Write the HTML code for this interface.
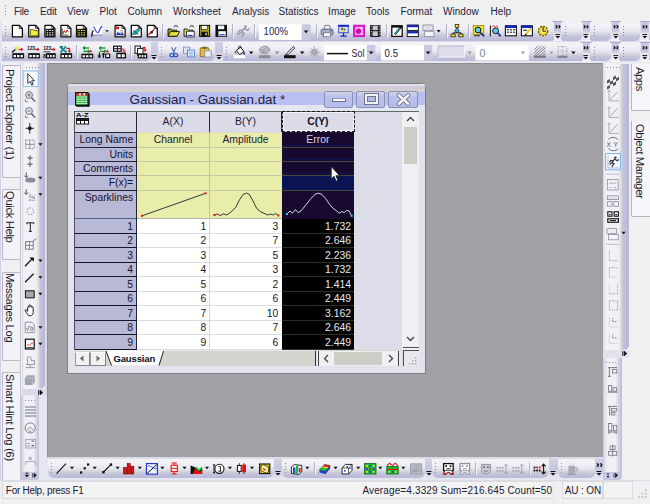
<!DOCTYPE html>
<html><head><meta charset="utf-8"><title>Origin</title>
<style>
html,body{margin:0;padding:0;}
body{width:650px;height:504px;overflow:hidden;position:relative;background:#e9e9f1;font-family:"Liberation Sans",sans-serif;font-size:10.4px;color:#1a1a30;}
.a{position:absolute;}
svg{position:absolute;overflow:visible;}
#menubar{left:0;top:0;width:650px;height:21px;background:#f0f0f1;}
#menubar span{position:absolute;top:6px;font-size:10px;color:#24243e;margin-left:-0.4px;white-space:nowrap;}
.tb{background:linear-gradient(#f7f7fb 0%,#ececf4 40%,#c6c6de 100%);border-radius:0 0 5px 0;}
.tbv{background:linear-gradient(90deg,#f7f7fb 0%,#ececf4 40%,#c6c6de 100%);border-radius:0 0 5px 0;}
.grip{position:absolute;width:1px;background:repeating-linear-gradient(#8a8aa0 0 1px,transparent 1px 3px);}
.griph{position:absolute;height:1px;background:repeating-linear-gradient(90deg,#8a8aa0 0 1px,transparent 1px 3px);}
#mdi{left:47.4px;top:63.4px;width:555.6px;height:393.4px;background:#a1a1a5;box-shadow:inset 0 1px 0 #8d8d92,inset 1px 0 0 #909096;}
#status{left:0;top:480px;width:650px;height:24px;background:#f0f0f2;}
#status span{position:absolute;top:5.4px;font-size:10px;color:#202030;white-space:nowrap;}
#win{left:67px;top:83px;width:359px;height:291px;}
.cell{position:absolute;white-space:nowrap;overflow:hidden;}
.rh{background:#b8b8d7;color:#1a1a38;text-align:right;}
.vt{position:absolute;writing-mode:vertical-rl;font-size:11px;color:#16162e;white-space:nowrap;}
</style></head><body>
<div id="menubar" class="a">
<div class="grip" style="left:5.2px;top:5px;height:12px"></div>
<span style="left:14.5px;letter-spacing:-0.4px">File</span><span style="left:40.5px;letter-spacing:-0.2px">Edit</span><span style="left:67.5px">View</span><span style="left:100px">Plot</span><span style="left:128px">Column</span><span style="left:173.5px">Worksheet</span><span style="left:232.5px">Analysis</span><span style="left:279px">Statistics</span><span style="left:328.5px">Image</span><span style="left:366.5px">Tools</span><span style="left:401px">Format</span><span style="left:443.5px">Window</span><span style="left:491px">Help</span>
</div>
<div id="toolbars">
<div class="a" style="left:0.0px;top:21.0px;width:650.0px;height:42.0px;background:#e4e4f0;"></div>
<div class="a" style="left:0.0px;top:61.3px;width:650.0px;height:2.3px;background:#e6e6f0;"></div>
<div class="a" style="left:0.0px;top:40.5px;width:650.0px;height:1.5px;background:#dcdcea;"></div>
<div class="a" style="left:1.5px;top:21.0px;width:552.5px;height:19.5px;background:linear-gradient(#f3f3f6 0%,#efeff5 30%,#e4e4f0 52%,#d4d4da 66%,#c4c4dc 77%,#b9b9d8 100%);border-radius:0 0 0px 0;"></div>
<div class="grip" style="left:4.7px;top:25.5px;height:11px"></div>
<div class="a" style="left:561.2px;top:21.0px;width:20.6px;height:19.5px;background:linear-gradient(#f3f3f6 0%,#efeff5 30%,#e4e4f0 52%,#d4d4da 66%,#c4c4dc 77%,#b9b9d8 100%);border-radius:0 0 5px 0;"></div>
<div class="grip" style="left:565.4px;top:25.5px;height:11px"></div>
<div class="a" style="left:554.0px;top:21.0px;width:7.4px;height:19.5px;background:linear-gradient(#c8c8e3 0,#c4c4e0 48%,#d4d4d2 55%,#e6e6f0 63%,#efeff5 100%);"></div>
<div class="a" style="left:552.4px;top:20.8px;width:10.5px;height:1.5px;background:#a9a9d0;border-radius:1px;"></div>
<div class="a" style="left:553.0px;top:39.5px;width:9.4px;height:1.4px;background:#f4f4f8;"></div>
<svg style="left:554.6px;top:25.0px" width="6" height="3.4" viewBox="0 0 6 3.4"><path d="M0.3 0.2H1.9L2.7 1.7L1.9 3.2H0.3L1.1 1.7Z M3.2 0.2H4.8L5.6 1.7L4.8 3.2H3.2L4 1.7Z" fill="#14141f"/></svg>
<svg style="left:554.6px;top:33.9px" width="5.6" height="5" viewBox="0 0 5.6 5"><path d="M0.4 0.6H5.2" stroke="#101018" stroke-width="1"/><path d="M0.4 2H5.2L2.8 4.6Z" fill="#101018"/></svg>
<div class="a" style="left:590.0px;top:21.0px;width:21.0px;height:19.5px;background:linear-gradient(#f3f3f6 0%,#efeff5 30%,#e4e4f0 52%,#d4d4da 66%,#c4c4dc 77%,#b9b9d8 100%);border-radius:0 0 5px 0;"></div>
<div class="grip" style="left:594.2px;top:25.5px;height:11px"></div>
<div class="a" style="left:582.8px;top:21.0px;width:7.4px;height:19.5px;background:linear-gradient(#c8c8e3 0,#c4c4e0 48%,#d4d4d2 55%,#e6e6f0 63%,#efeff5 100%);"></div>
<div class="a" style="left:581.2px;top:20.8px;width:10.5px;height:1.5px;background:#a9a9d0;border-radius:1px;"></div>
<div class="a" style="left:581.8px;top:39.5px;width:9.4px;height:1.4px;background:#f4f4f8;"></div>
<svg style="left:583.4px;top:25.0px" width="6" height="3.4" viewBox="0 0 6 3.4"><path d="M0.3 0.2H1.9L2.7 1.7L1.9 3.2H0.3L1.1 1.7Z M3.2 0.2H4.8L5.6 1.7L4.8 3.2H3.2L4 1.7Z" fill="#14141f"/></svg>
<svg style="left:583.4px;top:33.9px" width="5.6" height="5" viewBox="0 0 5.6 5"><path d="M0.4 0.6H5.2" stroke="#101018" stroke-width="1"/><path d="M0.4 2H5.2L2.8 4.6Z" fill="#101018"/></svg>
<div class="a" style="left:619.2px;top:21.0px;width:21.1px;height:19.5px;background:linear-gradient(#f3f3f6 0%,#efeff5 30%,#e4e4f0 52%,#d4d4da 66%,#c4c4dc 77%,#b9b9d8 100%);border-radius:0 0 5px 0;"></div>
<div class="grip" style="left:623.4px;top:25.5px;height:11px"></div>
<div class="a" style="left:612.0px;top:21.0px;width:7.4px;height:19.5px;background:linear-gradient(#c8c8e3 0,#c4c4e0 48%,#d4d4d2 55%,#e6e6f0 63%,#efeff5 100%);"></div>
<div class="a" style="left:610.4px;top:20.8px;width:10.5px;height:1.5px;background:#a9a9d0;border-radius:1px;"></div>
<div class="a" style="left:611.0px;top:39.5px;width:9.4px;height:1.4px;background:#f4f4f8;"></div>
<svg style="left:612.6px;top:25.0px" width="6" height="3.4" viewBox="0 0 6 3.4"><path d="M0.3 0.2H1.9L2.7 1.7L1.9 3.2H0.3L1.1 1.7Z M3.2 0.2H4.8L5.6 1.7L4.8 3.2H3.2L4 1.7Z" fill="#14141f"/></svg>
<svg style="left:612.6px;top:33.9px" width="5.6" height="5" viewBox="0 0 5.6 5"><path d="M0.4 0.6H5.2" stroke="#101018" stroke-width="1"/><path d="M0.4 2H5.2L2.8 4.6Z" fill="#101018"/></svg>
<div class="a" style="left:648.5px;top:21.0px;width:1.5px;height:19.5px;background:linear-gradient(#f3f3f6 0%,#efeff5 30%,#e4e4f0 52%,#d4d4da 66%,#c4c4dc 77%,#b9b9d8 100%);border-radius:0 0 5px 0;"></div>
<div class="grip" style="left:652.7px;top:25.5px;height:11px"></div>
<div class="a" style="left:641.3px;top:21.0px;width:7.4px;height:19.5px;background:linear-gradient(#c8c8e3 0,#c4c4e0 48%,#d4d4d2 55%,#e6e6f0 63%,#efeff5 100%);"></div>
<div class="a" style="left:639.7px;top:20.8px;width:10.5px;height:1.5px;background:#a9a9d0;border-radius:1px;"></div>
<div class="a" style="left:640.3px;top:39.5px;width:9.4px;height:1.4px;background:#f4f4f8;"></div>
<svg style="left:641.9px;top:25.0px" width="6" height="3.4" viewBox="0 0 6 3.4"><path d="M0.3 0.2H1.9L2.7 1.7L1.9 3.2H0.3L1.1 1.7Z M3.2 0.2H4.8L5.6 1.7L4.8 3.2H3.2L4 1.7Z" fill="#14141f"/></svg>
<svg style="left:641.9px;top:33.9px" width="5.6" height="5" viewBox="0 0 5.6 5"><path d="M0.4 0.6H5.2" stroke="#101018" stroke-width="1"/><path d="M0.4 2H5.2L2.8 4.6Z" fill="#101018"/></svg>
<div class="a" style="left:1.5px;top:42.0px;width:149.0px;height:19.3px;background:linear-gradient(#f3f3f6 0%,#efeff5 30%,#e4e4f0 52%,#d4d4da 66%,#c4c4dc 77%,#b9b9d8 100%);border-radius:0 0 5px 0;"></div>
<div class="grip" style="left:4.7px;top:46.5px;height:11px"></div>
<div class="a" style="left:150.5px;top:42.0px;width:7.2px;height:19.3px;background:linear-gradient(#d2d2e6 0%,#c6c6e0 50%,#e4e4f0 100%);"></div>
<svg style="left:151.1px;top:55.1px" width="6" height="5" viewBox="0 0 6 5"><path d="M0.5 0.5H5.5" stroke="#101018" stroke-width="1"/><path d="M0.5 2H5.5L3 4.6Z" fill="#101018"/></svg>
<div class="a" style="left:157.7px;top:42.0px;width:57.7px;height:19.3px;background:linear-gradient(#f3f3f6 0%,#efeff5 30%,#e4e4f0 52%,#d4d4da 66%,#c4c4dc 77%,#b9b9d8 100%);border-radius:0 0 5px 0;"></div>
<div class="grip" style="left:160.9px;top:46.5px;height:11px"></div>
<div class="a" style="left:215.4px;top:42.0px;width:7.6px;height:19.3px;background:linear-gradient(#d2d2e6 0%,#c6c6e0 50%,#e4e4f0 100%);"></div>
<svg style="left:216.2px;top:55.1px" width="6" height="5" viewBox="0 0 6 5"><path d="M0.5 0.5H5.5" stroke="#101018" stroke-width="1"/><path d="M0.5 2H5.5L3 4.6Z" fill="#101018"/></svg>
<div class="a" style="left:223.0px;top:42.0px;width:360.0px;height:19.3px;background:linear-gradient(#f3f3f6 0%,#efeff5 30%,#e4e4f0 52%,#d4d4da 66%,#c4c4dc 77%,#b9b9d8 100%);border-radius:0 0 0px 0;"></div>
<div class="grip" style="left:226.2px;top:46.5px;height:11px"></div>
<div class="a" style="left:590.0px;top:42.0px;width:21.0px;height:19.3px;background:linear-gradient(#f3f3f6 0%,#efeff5 30%,#e4e4f0 52%,#d4d4da 66%,#c4c4dc 77%,#b9b9d8 100%);border-radius:0 0 5px 0;"></div>
<div class="grip" style="left:594.2px;top:46.5px;height:11px"></div>
<div class="a" style="left:582.8px;top:42.0px;width:7.4px;height:19.3px;background:linear-gradient(#c8c8e3 0,#c4c4e0 48%,#d4d4d2 55%,#e6e6f0 63%,#efeff5 100%);"></div>
<div class="a" style="left:581.2px;top:41.8px;width:10.5px;height:1.5px;background:#a9a9d0;border-radius:1px;"></div>
<div class="a" style="left:581.8px;top:60.3px;width:9.4px;height:1.4px;background:#f4f4f8;"></div>
<svg style="left:583.4px;top:46.0px" width="6" height="3.4" viewBox="0 0 6 3.4"><path d="M0.3 0.2H1.9L2.7 1.7L1.9 3.2H0.3L1.1 1.7Z M3.2 0.2H4.8L5.6 1.7L4.8 3.2H3.2L4 1.7Z" fill="#14141f"/></svg>
<svg style="left:583.4px;top:54.7px" width="5.6" height="5" viewBox="0 0 5.6 5"><path d="M0.4 0.6H5.2" stroke="#101018" stroke-width="1"/><path d="M0.4 2H5.2L2.8 4.6Z" fill="#101018"/></svg>
<div class="a" style="left:619.2px;top:42.0px;width:21.1px;height:19.3px;background:linear-gradient(#f3f3f6 0%,#efeff5 30%,#e4e4f0 52%,#d4d4da 66%,#c4c4dc 77%,#b9b9d8 100%);border-radius:0 0 5px 0;"></div>
<div class="grip" style="left:623.4px;top:46.5px;height:11px"></div>
<div class="a" style="left:612.0px;top:42.0px;width:7.4px;height:19.3px;background:linear-gradient(#c8c8e3 0,#c4c4e0 48%,#d4d4d2 55%,#e6e6f0 63%,#efeff5 100%);"></div>
<div class="a" style="left:610.4px;top:41.8px;width:10.5px;height:1.5px;background:#a9a9d0;border-radius:1px;"></div>
<div class="a" style="left:611.0px;top:60.3px;width:9.4px;height:1.4px;background:#f4f4f8;"></div>
<svg style="left:612.6px;top:46.0px" width="6" height="3.4" viewBox="0 0 6 3.4"><path d="M0.3 0.2H1.9L2.7 1.7L1.9 3.2H0.3L1.1 1.7Z M3.2 0.2H4.8L5.6 1.7L4.8 3.2H3.2L4 1.7Z" fill="#14141f"/></svg>
<svg style="left:612.6px;top:54.7px" width="5.6" height="5" viewBox="0 0 5.6 5"><path d="M0.4 0.6H5.2" stroke="#101018" stroke-width="1"/><path d="M0.4 2H5.2L2.8 4.6Z" fill="#101018"/></svg>
<div class="a" style="left:648.5px;top:42.0px;width:1.5px;height:19.3px;background:linear-gradient(#f3f3f6 0%,#efeff5 30%,#e4e4f0 52%,#d4d4da 66%,#c4c4dc 77%,#b9b9d8 100%);border-radius:0 0 5px 0;"></div>
<div class="grip" style="left:652.7px;top:46.5px;height:11px"></div>
<div class="a" style="left:641.3px;top:42.0px;width:7.4px;height:19.3px;background:linear-gradient(#c8c8e3 0,#c4c4e0 48%,#d4d4d2 55%,#e6e6f0 63%,#efeff5 100%);"></div>
<div class="a" style="left:639.7px;top:41.8px;width:10.5px;height:1.5px;background:#a9a9d0;border-radius:1px;"></div>
<div class="a" style="left:640.3px;top:60.3px;width:9.4px;height:1.4px;background:#f4f4f8;"></div>
<svg style="left:641.9px;top:46.0px" width="6" height="3.4" viewBox="0 0 6 3.4"><path d="M0.3 0.2H1.9L2.7 1.7L1.9 3.2H0.3L1.1 1.7Z M3.2 0.2H4.8L5.6 1.7L4.8 3.2H3.2L4 1.7Z" fill="#14141f"/></svg>
<svg style="left:641.9px;top:54.7px" width="5.6" height="5" viewBox="0 0 5.6 5"><path d="M0.4 0.6H5.2" stroke="#101018" stroke-width="1"/><path d="M0.4 2H5.2L2.8 4.6Z" fill="#101018"/></svg>
<div class="a" style="left:161.5px;top:23.5px;width:1.0px;height:14.5px;background:#b4b4c8;box-shadow:1px 0 0 #f4f4fa;"></div>
<div class="a" style="left:231.5px;top:23.5px;width:1.0px;height:14.5px;background:#b4b4c8;box-shadow:1px 0 0 #f4f4fa;"></div>
<div class="a" style="left:254.0px;top:23.5px;width:1.0px;height:14.5px;background:#b4b4c8;box-shadow:1px 0 0 #f4f4fa;"></div>
<div class="a" style="left:315.5px;top:23.5px;width:1.0px;height:14.5px;background:#b4b4c8;box-shadow:1px 0 0 #f4f4fa;"></div>
<div class="a" style="left:385.8px;top:23.5px;width:1.0px;height:14.5px;background:#b4b4c8;box-shadow:1px 0 0 #f4f4fa;"></div>
<div class="a" style="left:446.0px;top:23.5px;width:1.0px;height:14.5px;background:#b4b4c8;box-shadow:1px 0 0 #f4f4fa;"></div>
<div class="a" style="left:468.0px;top:23.5px;width:1.0px;height:14.5px;background:#b4b4c8;box-shadow:1px 0 0 #f4f4fa;"></div>
<div class="a" style="left:76.0px;top:44.5px;width:1.0px;height:14.5px;background:#b4b4c8;box-shadow:1px 0 0 #f4f4fa;"></div>
<div class="a" style="left:130.0px;top:44.5px;width:1.0px;height:14.5px;background:#b4b4c8;box-shadow:1px 0 0 #f4f4fa;"></div>
<svg style="left:0;top:0" width="650" height="64" viewBox="0 0 650 64"><path d="M12.4 25.3H19.2L22.4 28.5V36.8H12.4Z" fill="#fff" stroke="#0c0c0c" stroke-width="1.25" stroke-linejoin="round"/><path d="M19.2 25.6V28.5H22.1" fill="none" stroke="#0c0c0c" stroke-width="0.7"/><path d="M28.7 25.3H35.5L38.7 28.5V36.8H28.7Z" fill="#fff" stroke="#0c0c0c" stroke-width="1.25" stroke-linejoin="round"/><path d="M35.5 25.6V28.5H38.4" fill="none" stroke="#0c0c0c" stroke-width="0.7"/><path d="M30.4 29.6H33.4L34.2 30.6H38.2V35.8H30.4Z" fill="#f2f040" stroke="#4c4600" stroke-width="0.8"/><path d="M44.9 25.3H51.7L54.9 28.5V36.8H44.9Z" fill="#fff" stroke="#0c0c0c" stroke-width="1.25" stroke-linejoin="round"/><path d="M51.7 25.6V28.5H54.6" fill="none" stroke="#0c0c0c" stroke-width="0.7"/><rect x="46.2" y="29.4" width="7.6" height="6.6" fill="#fff" stroke="#0c0c0c" stroke-width="1.1"/><path d="M46.2 31.6H53.8M46.2 33.8H53.8M48.7 29.4V36.0M51.3 29.4V36.0" stroke="#0c0c0c" stroke-width="1.05"/><path d="M60.9 25.3H67.7L70.9 28.5V36.8H60.9Z" fill="#fff" stroke="#0c0c0c" stroke-width="1.25" stroke-linejoin="round"/><path d="M67.7 25.6V28.5H70.6" fill="none" stroke="#0c0c0c" stroke-width="0.7"/><path d="M62.2 28.3V35.1H68.5" stroke="#101010" stroke-width="0.8" fill="none"/><path d="M62.8 33.8L64.3 30.6L65.6 33.0L67 30.0L68.3 32.2" stroke="#e01010" stroke-width="1" fill="none"/><path d="M76.5 25.3H83.3L86.5 28.5V36.8H76.5Z" fill="#fff" stroke="#0c0c0c" stroke-width="1.25" stroke-linejoin="round"/><path d="M83.3 25.6V28.5H86.2" fill="none" stroke="#0c0c0c" stroke-width="0.7"/><rect x="77.8" y="29.4" width="7.6" height="6.6" fill="#f6f030" stroke="#0c0c0c" stroke-width="1.1"/><path d="M77.8 31.6H85.4M77.8 33.8H85.4M80.3 29.4V36.0M82.9 29.4V36.0" stroke="#0c0c0c" stroke-width="1.05"/><rect x="93" y="24.8" width="9.5" height="9.5" fill="#fff"/><path d="M93.3 26.8C95 26.8 95.6 32.8 97.6 32.8S100 26.400000000000002 102.3 26.400000000000002" stroke="#2838e0" stroke-width="1.1" fill="none"/><path d="M93 35.3H102.6" stroke="#8088c0" stroke-width="0.8"/><path d="M91.6 36.8C92.2 33.8 92.2 31.8 93.4 30.4" stroke="#101010" stroke-width="1.2" fill="none"/><path d="M105.2 30.1H109L107.1 32.4Z" fill="#404050"/><path d="M115.1 25.3H121.9L125.1 28.5V36.8H115.1Z" fill="#fff" stroke="#0c0c0c" stroke-width="1.25" stroke-linejoin="round"/><path d="M121.9 25.6V28.5H124.8" fill="none" stroke="#0c0c0c" stroke-width="0.7"/><rect x="116" y="26.6" width="3" height="2.6" fill="#e01818"/><path d="M116 35.2L117.6 31.4L119 33.4L120 32.2L121.2 35.2Z" fill="#1830d8"/><path d="M120.2 30.8H123M120.8 32.4H123" stroke="#606060" stroke-width="0.7"/><path d="M121 33.4H123.6V35.4H121Z" fill="#303030"/><path d="M131.3 25.3H138.1L141.3 28.5V36.8H131.3Z" fill="#fff" stroke="#0c0c0c" stroke-width="1.25" stroke-linejoin="round"/><path d="M138.1 25.6V28.5H141.0" fill="none" stroke="#0c0c0c" stroke-width="0.7"/><path d="M132.4 34.4C133 30.8 137.6 29.0 139.4 29.4C139.6 32.4 135.6 35.4 132.4 34.4Z" fill="#28b0b8" stroke="#105860" stroke-width="0.7"/><path d="M133 30.4L138.6 34.8" stroke="#105860" stroke-width="0.9"/><path d="M147.3 25.3H154.1L157.3 28.5V36.8H147.3Z" fill="#fff" stroke="#0c0c0c" stroke-width="1.25" stroke-linejoin="round"/><path d="M154.1 25.6V28.5H157.0" fill="none" stroke="#0c0c0c" stroke-width="0.7"/><path d="M148.4 35.0L154.4 29.200000000000003" stroke="#e01818" stroke-width="1.2"/><rect x="150.6" y="31.200000000000003" width="2.2" height="2.2" fill="#101010"/><path d="M168 29.0H171.4L172.4 30.200000000000003H177V36.2H168Z" fill="#a8a020" stroke="#101010" stroke-width="0.9"/><path d="M168.2 36.2L170.4 31.6H179.6L177.2 36.2Z" fill="#e8e048" stroke="#101010" stroke-width="0.9"/><path d="M173.6 27.0C175 25.2 177.4 25.400000000000002 178 27.2" stroke="#101010" stroke-width="0.9" fill="none"/><path d="M184 29.0H187.4L188.4 30.200000000000003H193V36.2H184Z" fill="#e8e048" stroke="#101010" stroke-width="0.9"/><rect x="186.6" y="31.200000000000003" width="7.6" height="5.8" fill="#fff" stroke="#101010" stroke-width="0.8"/><path d="M187.6 35.4H192.6" stroke="#1830d8" stroke-width="1.1"/><path d="M189.6 27.0C191 25.2 193.4 25.400000000000002 194 27.2" stroke="#101010" stroke-width="0.9" fill="none"/><rect x="199.6" y="25.400000000000002" width="10" height="11" fill="#a8a020" stroke="#101010" stroke-width="1.1"/><rect x="201.6" y="25.6" width="6" height="4" fill="#f4f4e0" stroke="#101010" stroke-width="0.6"/><rect x="201.4" y="31.8" width="6.4" height="4.6" fill="#101010"/><rect x="205.4" y="32.8" width="1.4" height="2.6" fill="#c8c8c8"/><rect x="216" y="25.400000000000002" width="10.4" height="11" fill="#101010" stroke="#101010" stroke-width="1.1"/><rect x="218" y="25.6" width="6.2" height="3.6" fill="#f4f4f4"/><rect x="218.4" y="31.200000000000003" width="7.4" height="5" fill="#fff"/><path d="M219.2 34.8H224.8" stroke="#1830d8" stroke-width="1.2"/><circle cx="245.4" cy="26.6" r="1.4" fill="#9c9cae"/><path d="M244.4 28.2L241.6 32.2L244 33.4L241.8 36.6M244.4 28.400000000000002L247.6 30.200000000000003L249 28.8M243 30.6L240 30.200000000000003L238.4 32.2M241.8 32.4L238.8 34.2L237.4 33.8" stroke="#9c9cae" stroke-width="1.5" fill="none" stroke-linecap="round"/><rect x="259" y="24.4" width="42.8" height="15.6" fill="#fff"/><rect x="301.8" y="24.4" width="9" height="15.6" fill="#c9c9e2"/><path d="M303.8 30.6H308.4L306.1 33.2Z" fill="#101018"/><text x="263.6" y="35.2" font-family="Liberation Sans, sans-serif" font-size="10.8" fill="#22224a" textLength="24.5" lengthAdjust="spacingAndGlyphs">100%</text><path d="M324 29.4L325 25.400000000000002H329.6L330.6 29.4Z" fill="#f0f0f4" stroke="#606878" stroke-width="0.8"/><rect x="321.2" y="29.200000000000003" width="11.8" height="5.6" rx="1" fill="#a8b0c4" stroke="#505868" stroke-width="0.8"/><rect x="323.6" y="32.8" width="7" height="4" fill="#f4f4f8" stroke="#606878" stroke-width="0.7"/><rect x="330" y="30.4" width="1.6" height="1.2" fill="#4060d0"/><rect x="338" y="24.8" width="11" height="1.8" fill="#1828c8"/><rect x="338.8" y="26.6" width="9.4" height="6.2" fill="#d8e8f8" stroke="#1828c8" stroke-width="0.8"/><rect x="341" y="27.8" width="2" height="2" fill="#e02020"/><rect x="343.4" y="28.400000000000002" width="2" height="2.4" fill="#20b040"/><rect x="342" y="30.0" width="2" height="1.8" fill="#e8d820"/><path d="M343.5 32.8V35.6M340.4 36.2H346.8" stroke="#1828c8" stroke-width="1.3"/><rect x="353.6" y="25.2" width="11" height="11.4" fill="#f020d8" stroke="#c010b0" stroke-width="0.9"/><rect x="355.4" y="27.0" width="7.4" height="7.8" fill="#f8b8f0"/><circle cx="358.6" cy="31.200000000000003" r="2.6" fill="#c010b0"/><path d="M360.6 28.0H362.6M360.6 34.0H362.6" stroke="#fff" stroke-width="0.9"/><rect x="370" y="25.0" width="10.4" height="12" fill="#101010"/><rect x="372.6" y="25.6" width="5.2" height="4.6" fill="#c8c8d4"/><rect x="372.6" y="31.200000000000003" width="5.2" height="4.8" fill="#c8c8d4"/><path d="M371.2 25.8V36.8M379.2 25.8V36.8" stroke="#e8e8e8" stroke-width="0.9" stroke-dasharray="1.2 1.4"/><rect x="391.8" y="25.8" width="10.4" height="10.6" fill="#fff" stroke="#101010" stroke-width="1.3"/><rect x="391.8" y="25.400000000000002" width="10.4" height="2.2" fill="#101010"/><path d="M395 34.4L401.4 26.400000000000002" stroke="#101010" stroke-width="2.2"/><path d="M395.2 34.2L400 28.2" stroke="#28b8c8" stroke-width="1.1"/><rect x="407.2" y="25.0" width="11.2" height="5.4" fill="#fff" stroke="#101010" stroke-width="0.9"/><rect x="407.2" y="25.0" width="11.2" height="2.2" fill="#1828b8"/><rect x="407.2" y="31.2" width="11.2" height="5.4" fill="#fff" stroke="#101010" stroke-width="0.9"/><rect x="407.2" y="31.2" width="11.2" height="2.2" fill="#1828b8"/><rect x="423" y="25.0" width="10" height="5.6" fill="#ececf4" stroke="#9090a4" stroke-width="0.9"/><path d="M423.4 25.400000000000002L432.6 30.200000000000003M432.6 25.400000000000002L423.4 30.200000000000003" stroke="#c0c0d0" stroke-width="0.6"/><rect x="424.4" y="31.200000000000003" width="9.6" height="5.4" fill="#f4f4f8" stroke="#9090a4" stroke-width="0.9"/><path d="M436.6 30.1H440.6L438.6 32.4Z" fill="#101018"/><path d="M457 27.400000000000002V32.8M453 34.8V32.8H461V34.8" stroke="#101010" stroke-width="0.9" fill="none"/><rect x="455.2" y="24.6" width="3.6" height="2.8" fill="#f0e020" stroke="#101010" stroke-width="0.7"/><path d="M457 28.400000000000002L459.4 30.6L457 32.8L454.6 30.6Z" fill="#30c8e0" stroke="#101010" stroke-width="0.7"/><rect x="451" y="34.0" width="4.2" height="2.8" fill="#f0e020" stroke="#101010" stroke-width="0.7"/><rect x="458.8" y="34.0" width="4.2" height="2.8" fill="#f0e020" stroke="#101010" stroke-width="0.7"/><rect x="473.2" y="25.400000000000002" width="10.6" height="9" fill="#f4e828" stroke="#807800" stroke-width="0.7"/><circle cx="478" cy="30.0" r="2.9" fill="#58d0e8" stroke="#101010" stroke-width="1"/><path d="M480.2 32.4L484.2 36.4" stroke="#1828b8" stroke-width="1.8"/><path d="M474 35.8H480" stroke="#101010" stroke-width="0.9"/><path d="M490.4 25.400000000000002V36.4" stroke="#101010" stroke-width="1"/><path d="M492 27.2L493.6 25.6L495.2 27.400000000000002L496.8 25.8L498.4 27.400000000000002" stroke="#e02020" stroke-width="0.9" fill="none"/><circle cx="495.6" cy="30.8" r="2.9" fill="#58d0e8" stroke="#101010" stroke-width="1"/><path d="M497.8 33.0L500.6 36.4" stroke="#1828b8" stroke-width="1.7"/><rect x="505.4" y="25.8" width="11" height="10" fill="#fff" stroke="#101010" stroke-width="1.1"/><rect x="505.4" y="25.400000000000002" width="11" height="2.6" fill="#1828b8"/><path d="M507 29.8H515M507 32.2H515" stroke="#101010" stroke-width="1" stroke-dasharray="2 1"/><rect x="521.4" y="25.8" width="11" height="10" fill="#fff" stroke="#101010" stroke-width="1.1"/><rect x="521.4" y="25.400000000000002" width="11" height="2.6" fill="#1828b8"/><path d="M523 30.200000000000003H527" stroke="#101010" stroke-width="1"/><path d="M525.6 34.8L530.8 28.400000000000002" stroke="#e8c820" stroke-width="1.8"/><path d="M525 35.4L526.2 34.0" stroke="#101010" stroke-width="1.2"/><circle cx="543" cy="31.0" r="4.7" fill="#e8d828" stroke="#605800" stroke-width="1.3" stroke-dasharray="2 1.1"/><circle cx="543" cy="31.0" r="2.3" fill="#f8f0a0"/><path d="M543 27.2V31.200000000000003H545.6" stroke="#101010" stroke-width="1" fill="none"/><rect x="13.0" y="54.0" width="10.5" height="3.8" fill="#fff" stroke="#101010" stroke-width="1.2"/><path d="M16.5 54.0V57.8M20.0 54.0V57.8" stroke="#101010" stroke-width="1.1"/><rect x="13.0" y="53.4" width="10.5" height="1.4" fill="#101010"/><path d="M12 52.4L16.4 48.6" stroke="#101010" stroke-width="1.3"/><path d="M16.6 45.6L17.4 47.4L19.2 47.8L17.6 48.8L17.8 50.6L16.4 49.4L14.6 50L15.4 48.4L14.4 46.8L16.2 47.2Z" fill="#f4e820"/><path d="M18.6 49.4H21.6" stroke="#e01020" stroke-width="1.1"/><path d="M21.0 47.6L23.4 49.4L21.0 51.2Z" fill="#e01020"/><rect x="28.8" y="54.0" width="10.5" height="3.8" fill="#fff" stroke="#101010" stroke-width="1.2"/><path d="M32.3 54.0V57.8M35.8 54.0V57.8" stroke="#101010" stroke-width="1.1"/><rect x="28.8" y="53.4" width="10.5" height="1.4" fill="#101010"/><text x="27" y="50.4" font-family="Liberation Sans, sans-serif" font-size="5.6" font-weight="bold" fill="#101010" textLength="8" lengthAdjust="spacingAndGlyphs">123</text><path d="M34.8 49.4H37.8" stroke="#e01020" stroke-width="1.1"/><path d="M37.2 47.6L39.6 49.4L37.2 51.2Z" fill="#e01020"/><rect x="46.6" y="54.0" width="8.6" height="3.8" fill="#fff" stroke="#101010" stroke-width="1.2"/><path d="M49.5 54.0V57.8M52.3 54.0V57.8" stroke="#101010" stroke-width="1.1"/><rect x="46.6" y="53.4" width="8.6" height="1.4" fill="#101010"/><text x="43.2" y="50.4" font-family="Liberation Sans, sans-serif" font-size="5.6" font-weight="bold" fill="#101010" textLength="8" lengthAdjust="spacingAndGlyphs">123</text><path d="M43.4 51.8H50" stroke="#101010" stroke-width="0.8"/><text x="43" y="57.8" font-family="Liberation Sans, sans-serif" font-size="5.6" font-weight="bold" fill="#101010">8</text><path d="M50.8 49.4H53.8" stroke="#e01020" stroke-width="1.1"/><path d="M53.2 47.6L55.6 49.4L53.2 51.2Z" fill="#e01020"/><rect x="61.0" y="54.0" width="10.5" height="3.8" fill="#fff" stroke="#101010" stroke-width="1.2"/><path d="M64.5 54.0V57.8M68.0 54.0V57.8" stroke="#101010" stroke-width="1.1"/><rect x="61.0" y="53.4" width="10.5" height="1.4" fill="#101010"/><path d="M60 46.4L66.6 52.4M66 46.4L60.4 52.4" stroke="#189098" stroke-width="2"/><path d="M60 46.6H63" stroke="#106068" stroke-width="1"/><path d="M66.4 48.4H69.4V51" stroke="#e01020" stroke-width="1.1" fill="none"/><path d="M67.6 50.6H71.2L69.4 53Z" fill="#e01020"/><path d="M83.8 48.0H89.4" stroke="#109028" stroke-width="1.3"/><path d="M85.0 45.8L82.4 48.0L85.0 50.2Z" fill="#109028"/><path d="M83.4 51.4H88.8" stroke="#109028" stroke-width="1.3"/><path d="M87.8 49.2L90.4 51.4L87.8 53.6Z" fill="#109028"/><rect x="82.0" y="54.4" width="10.6" height="3.4" fill="#fff" stroke="#101010" stroke-width="1.2"/><path d="M85.5 54.4V57.8M89.1 54.4V57.8" stroke="#101010" stroke-width="1.1"/><rect x="82.0" y="53.8" width="10.6" height="1.4" fill="#101010"/><path d="M90.6 49.4L92.4 52.2H88.8Z" fill="#e02030"/><path d="M100.0 48.0H105.6" stroke="#109028" stroke-width="1.3"/><path d="M101.2 45.8L98.6 48.0L101.2 50.2Z" fill="#109028"/><path d="M99.6 51.4H105.0" stroke="#109028" stroke-width="1.3"/><path d="M104.0 49.2L106.6 51.4L104.0 53.6Z" fill="#109028"/><path d="M99.4 52.6V57.8M103.4 53V58" stroke="#101010" stroke-width="1.2"/><path d="M97.6 55.6H101.2L99.4 58.2Z" fill="#101010"/><path d="M101.6 55H105.2L103.4 52.4Z" fill="#101010"/><path d="M107.4 49.6L109.2 52.2H105.6Z" fill="#e02030"/><path d="M105.8 54H109.6V57.6H105.8Z" fill="#fff" stroke="#101010" stroke-width="1.2"/><rect x="113.6" y="46.2" width="7.6" height="5" fill="#fff" stroke="#101010" stroke-width="1.2"/><path d="M117.4 46.2V51.2M113.6 48.7H121.2" stroke="#101010" stroke-width="1"/><path d="M121.6 49.2H124.4" stroke="#e01020" stroke-width="1.1"/><path d="M122.4 50.4H126L124.2 52.8Z" fill="#e01020"/><rect x="117" y="53.4" width="8.4" height="4.4" fill="#fff" stroke="#101010" stroke-width="1.3"/><path d="M121.2 53.4V57.8" stroke="#101010" stroke-width="1.1"/><rect x="117" y="52.8" width="8.4" height="1.4" fill="#101010"/><rect x="135" y="46" width="5.4" height="7.4" fill="#fff" stroke="#101010" stroke-width="1"/><rect x="137.6" y="48.4" width="5.4" height="7" fill="#fff" stroke="#101010" stroke-width="1"/><path d="M142.6 47.6H145V50" stroke="#e01020" stroke-width="1.1" fill="none"/><path d="M143.2 49.6H146.8L145 52Z" fill="#e01020"/><rect x="138.4" y="54.2" width="8.2" height="3.6" fill="#fff" stroke="#101010" stroke-width="1.2"/><path d="M141.1 54.2V57.8M143.9 54.2V57.8" stroke="#101010" stroke-width="1.1"/><rect x="138.4" y="53.6" width="8.2" height="1.4" fill="#101010"/><g transform="translate(0 7.6) scale(1 0.855)"><path d="M171.6 46.2L174.6 53.6M176 46.2L173 53.6" stroke="#5868a8" stroke-width="1.2"/><circle cx="171.8" cy="55.6" r="1.9" fill="none" stroke="#2848c8" stroke-width="1.3"/><circle cx="175.8" cy="55.6" r="1.9" fill="none" stroke="#2848c8" stroke-width="1.3"/><rect x="183.4" y="46.2" width="6.4" height="7.4" fill="#dce8f8" stroke="#6890d0" stroke-width="0.9"/><rect x="187.4" y="49.6" width="7" height="8" fill="#e8f0fc" stroke="#4878c8" stroke-width="0.9"/><path d="M188.8 52H193M188.8 53.8H193M188.8 55.6H193" stroke="#6890d0" stroke-width="0.7"/><rect x="200.2" y="47" width="8.6" height="10.4" rx="0.8" fill="#e8b838" stroke="#806010" stroke-width="0.9"/><rect x="202.4" y="45.8" width="4.2" height="2.4" fill="#706040"/><rect x="204.8" y="50.6" width="6.4" height="7.2" fill="#e8ecf4" stroke="#7888a8" stroke-width="0.8"/></g><path d="M236.4 50.4L240.6 47.2L244 51.6L239.6 54.6Z" fill="#fff" stroke="#101010" stroke-width="1"/><path d="M238.4 49C238 45.4 241.4 45.4 241.2 48.2" stroke="#101010" stroke-width="0.9" fill="none"/><path d="M243.4 51C245 52.4 245.4 54.4 244.4 55C243 54.6 243 52.6 243.4 51Z" fill="#1828c0"/><path d="M236 50.6C234.6 52 235 53.6 236.6 53" stroke="#101010" stroke-width="0.8" fill="none"/><rect x="233.8" y="55.2" width="11.4" height="3" fill="#fff"/><path d="M249 51.6H253.4L251.2 54.2Z" fill="#101018"/><ellipse cx="264.6" cy="50" rx="5" ry="3.8" fill="#c4c4d0" stroke="#8c8c9c" stroke-width="0.9"/><path d="M260.6 52.4L267.6 46.8M262.6 53.4L269.4 48.4M261 49L266 53.6" stroke="#8c8c9c" stroke-width="0.8"/><rect x="259" y="55.2" width="11.4" height="3" fill="#8c8c94"/><path d="M275 51.6H279.4L277.2 54.2Z" fill="#8c8c9c"/><path d="M286.6 53.4L293.4 46.4L295 47.8L288.4 54.4L285.6 55Z" fill="#e0e0e8" stroke="#303038" stroke-width="0.9"/><rect x="284" y="55.2" width="11.6" height="3" fill="#101010"/><path d="M300 51.6H304.4L302.2 54.2Z" fill="#101018"/><circle cx="314.4" cy="52.2" r="3.4" fill="#a8a8b8"/><path d="M314.4 46V58.4M308.6 52.2H320.2M310.2 48L318.6 56.4M318.6 48L310.2 56.4" stroke="#a8a8b8" stroke-width="0.9"/><rect x="324" y="45" width="43" height="15.4" fill="#fff"/><path d="M327 53.6H348" stroke="#101010" stroke-width="1.5"/><text x="351.6" y="57.4" font-family="Liberation Sans, sans-serif" font-size="10.6" fill="#22224a" textLength="12.8" lengthAdjust="spacingAndGlyphs">Sol</text><rect x="366.8" y="45" width="8.6" height="15.4" fill="#c9c9e2"/><path d="M368.8 51.6H373.4L371.1 54.2Z" fill="#101018"/><rect x="381" y="45" width="43" height="15.4" fill="#fff"/><text x="384.6" y="57.4" font-family="Liberation Sans, sans-serif" font-size="10.6" fill="#22224a" textLength="13.4" lengthAdjust="spacingAndGlyphs">0.5</text><rect x="424" y="45" width="8.2" height="15.4" fill="#c9c9e2"/><path d="M425.8 51.6H430.4L428.1 54.2Z" fill="#101018"/><rect x="438" y="46" width="26.4" height="11" fill="#dcdcea" stroke="#f8f8fc" stroke-width="1"/><path d="M438 57V46H464.4" stroke="#a8a8bc" stroke-width="0.9" fill="none"/><path d="M467.4 51.6H471.8L469.6 54.2Z" fill="#9c9cac"/><rect x="475.4" y="45" width="53.4" height="15.4" fill="#fff"/><text x="479.6" y="57.4" font-family="Liberation Sans, sans-serif" font-size="10.6" fill="#7888a8">0</text><path d="M520.8 51.6H525.2L523 54.2Z" fill="#9c9cac"/><path d="M534.4 49.6L538.4 46M534.4 52.6L541.4 46M534.4 55.4L544.6 46M536.6 55.6L545.6 47.6M539.8 55.6L545.6 50.6M542.8 55.6L545.6 53.4" stroke="#787884" stroke-width="0.9"/><rect x="534" y="55.6" width="11.8" height="2.2" fill="#787884"/><path d="M549.2 51.6H553.6L551.4 54.2Z" fill="#9c9cac"/><rect x="558" y="46.6" width="9" height="9" fill="none" stroke="#9c9cac" stroke-width="0.8" stroke-dasharray="1.4 1.2"/><path d="M562.5 46.6V55.6M558 51H567" stroke="#9c9cac" stroke-width="0.8" stroke-dasharray="1.4 1.2"/><path d="M557.6 57H567.4" stroke="#606070" stroke-width="1.2"/><path d="M571.2 51.6H575.6L573.4 54.2Z" fill="#101018"/></svg>
</div>
<div id="leftp">
<div class="a" style="left:0.0px;top:63.0px;width:47.4px;height:417.0px;background:#efeff2;"></div>
<div class="a" style="left:0.0px;top:63.0px;width:20.5px;height:417.0px;background:#f0f0f2;"></div>
<div class="a" style="left:19.5px;top:63.0px;width:1.0px;height:417.0px;background:#c9c9d6;"></div>
<div class="a" style="left:0.0px;top:63.0px;width:1.4px;height:417.0px;background:#d0d0e6;"></div>
<div class="a" style="left:1.5px;top:64.5px;width:18.5px;height:113.5px;background:#f3f3f7;border:1px solid #b8b8c6;border-right:none;box-sizing:border-box;border-radius:2px 0 0 2px;"></div>
<div class="vt" style="left:3.2px;top:68.6px;width:14px;line-height:14px;font-size:11.2px;letter-spacing:-0.3px">Project Explorer (1)</div>
<div class="a" style="left:1.5px;top:188.5px;width:18.5px;height:71.5px;background:#f3f3f7;border:1px solid #b8b8c6;border-right:none;box-sizing:border-box;border-radius:2px 0 0 2px;"></div>
<div class="vt" style="left:3.2px;top:190.6px;width:14px;line-height:14px;font-size:11.2px;letter-spacing:-0.32px">Quick Help</div>
<div class="a" style="left:1.5px;top:271.5px;width:18.5px;height:89.5px;background:#f3f3f7;border:1px solid #b8b8c6;border-right:none;box-sizing:border-box;border-radius:2px 0 0 2px;"></div>
<div class="vt" style="left:3.2px;top:272.8px;width:14px;line-height:14px;font-size:11.2px;letter-spacing:-0.28px">Messages Log</div>
<div class="a" style="left:1.5px;top:371.5px;width:18.5px;height:109.5px;background:#f3f3f7;border:1px solid #b8b8c6;border-right:none;box-sizing:border-box;border-radius:2px 0 0 2px;"></div>
<div class="vt" style="left:3.2px;top:373.6px;width:14px;line-height:14px;font-size:11.2px;letter-spacing:-0.24px">Smart Hint Log (6)</div>
<div class="a" style="left:21.8px;top:63.0px;width:23.6px;height:326.0px;background:linear-gradient(90deg,#d8d8e8 0%,#f2f2f7 8%,#efeff5 60%,#e2e2dc 70%,#c4c4de 78%,#b8b8d8 100%);border-radius:0 0 5px 0;"></div>
<div class="a" style="left:45.4px;top:63.0px;width:2.0px;height:394.0px;background:#dcdce6;"></div>
<div class="griph" style="left:25.5px;top:66.5px;width:14px"></div>
<div class="a" style="left:21.8px;top:389.0px;width:23.6px;height:5.5px;background:#dadaea;"></div>
<svg style="left:38px;top:389.5px" width="6" height="5" viewBox="0 0 6 5"><path d="M0.5 0.2V4.8M2 0.2V4.8L4.8 2.5Z" fill="#101018" stroke="#101018" stroke-width="0.8"/></svg>
<div class="a" style="left:20.8px;top:394.5px;width:19.0px;height:85.0px;background:linear-gradient(90deg,#bcbcd4 0%,#d8d8e8 8%,#f0f0f5 22%,#efeff5 66%,#d4d4e6 82%,#bcbcd8 100%);border-radius:0 0 4px 0;"></div>
<div class="a" style="left:39.4px;top:394.5px;width:8.0px;height:85.0px;background:#e6e6f0;"></div>
<div class="a" style="left:21.8px;top:472.4px;width:17.6px;height:7.2px;background:#c6c6e1;border-radius:0 0 4px 0;"></div>
<div class="a" style="left:30.4px;top:473.2px;width:1.0px;height:5.8px;background:#e4e4f0;"></div>
<div class="griph" style="left:25px;top:399.5px;width:11px"></div>
<svg style="left:0;top:0" width="48" height="504" viewBox="0 0 48 504"><rect x="23.2" y="71" width="15" height="15.4" fill="#f8fbff" stroke="#8cbcee" stroke-width="1"/><path d="M27.8 73.6V83.4L30 81.4L31.8 85L33.2 84.4L31.6 80.8H34.6Z" fill="#fff" stroke="#181828" stroke-width="0.9" stroke-linejoin="round"/><circle cx="29" cy="95" r="3.4" fill="#e8e8f0" stroke="#70707c" stroke-width="1"/><path d="M31.4 97.6L35 101.4" stroke="#60606c" stroke-width="1.5"/><path d="M27.2 95H30.8" stroke="#50505c" stroke-width="0.8"/><path d="M29 93.2V96.8" stroke="#50505c" stroke-width="0.8"/><path d="M25.4 99V101.6H28.2" stroke="#70707c" stroke-width="0.8" fill="none"/><circle cx="29" cy="111" r="3.4" fill="#e8e8f0" stroke="#70707c" stroke-width="1"/><path d="M31.4 113.6L35 117.4" stroke="#60606c" stroke-width="1.5"/><path d="M27.2 111H30.8" stroke="#50505c" stroke-width="0.8"/><path d="M25.4 115V117.6H28.2" stroke="#70707c" stroke-width="0.8" fill="none"/><path d="M29.8 123V133.6M25.6 128.3H34" stroke="#101010" stroke-width="0.9"/><rect x="28.2" y="126.7" width="3.2" height="3.2" fill="#101010"/><rect x="25.6" y="140" width="8.6" height="8.6" fill="#f4f4f8" stroke="#80808c" stroke-width="0.9" stroke-dasharray="2 1"/><path d="M29.9 140V148.6M25.6 144.3H34.2" stroke="#80808c" stroke-width="0.9"/><path d="M38.3 143.3H42.5L40.4 145.8Z" fill="#101018"/><path d="M30 155.4V160.6M27.4 158H32.6M30 161.6V166.8M27.4 164.2H32.6" stroke="#404048" stroke-width="0.9"/><ellipse cx="30.4" cy="180" rx="5.2" ry="2.6" fill="#8c8c98"/><path d="M26.2 172.4V177M24.4 175.6L26.2 177.6L28 175.6" stroke="#404048" stroke-width="0.9" fill="none"/><path d="M38.3 176.8H42.5L40.4 179.3Z" fill="#101018"/><path d="M26.2 189.4V194M24.4 192.6L26.2 194.6L28 192.6" stroke="#404048" stroke-width="0.9" fill="none"/><path d="M28.8 196H35M28.8 200.4H35M30 193.8V201" stroke="#8c8c98" stroke-width="0.9" stroke-dasharray="1.6 1"/><path d="M31.4 197.6H34.2V199.4" stroke="#70707c" stroke-width="0.8" fill="none"/><path d="M38.3 193.2H42.5L40.4 195.7Z" fill="#101018"/><circle cx="30.2" cy="211.4" r="3.4" fill="none" stroke="#9090a0" stroke-width="1.1" stroke-dasharray="1.4 1.6"/><path d="M26.8 224.2V222.8H33.8V224.2M30.3 222.8V231.2M28.8 231.4H31.8" stroke="#101010" stroke-width="0.95" fill="none"/><rect x="25.6" y="241.6" width="7.6" height="7.6" fill="#f4f4f8" stroke="#70707c" stroke-width="0.9"/><path d="M29.4 241.6V249.2M25.6 245.4H33.2" stroke="#70707c" stroke-width="0.8"/><path d="M33 241.4L36 238.6" stroke="#9090a0" stroke-width="1.2"/><path d="M25 266.2L32.6 258.4" stroke="#101010" stroke-width="1.3"/><path d="M29.4 257.4H33.8V261.8Z" fill="#101010"/><path d="M38.3 259.4H42.5L40.4 261.9Z" fill="#101018"/><path d="M25 282.2L33.6 273.8" stroke="#101010" stroke-width="1.2"/><path d="M38.3 276.2H42.5L40.4 278.7Z" fill="#101018"/><rect x="25.4" y="290.8" width="8.8" height="7" fill="#a8a8ac" stroke="#101010" stroke-width="1"/><path d="M38.3 292.8H42.5L40.4 295.3Z" fill="#101018"/><path d="M27.6 311.4V307.4C27.6 306.2 29 306.2 29 307.4V305.8C29 304.6 30.4 304.6 30.4 305.8V306.4C30.4 305.4 31.8 305.4 31.8 306.6V307.4C31.8 306.6 33.2 306.6 33.2 307.8V312.4C33.2 314.6 32 315.8 30.2 315.8C28.4 315.8 27.6 314.6 26.6 312.8L25.2 310.6C24.8 309.6 26 309.2 26.6 310.2Z" fill="#fff" stroke="#101010" stroke-width="0.9"/><path d="M25.2 322.2H31.8L34.2 324.6V332.6H25.2Z" fill="#f0f0f6" stroke="#8c8c9c" stroke-width="0.9"/><path d="M26.6 328.4L27.6 330.6L28.6 326.4H30.4" stroke="#70707c" stroke-width="0.8" fill="none"/><path d="M30.6 327.4H32.6V330.4H30.6Z" stroke="#70707c" stroke-width="0.7" fill="none"/><path d="M38.3 326.2H42.5L40.4 328.7Z" fill="#101018"/><rect x="25.4" y="339.2" width="8.8" height="9.8" fill="#fff" stroke="#101010" stroke-width="1.2"/><path d="M26.8 345.4C28 342.6 29 347.4 30.4 344.6S32 343 33 343.4" stroke="#e01818" stroke-width="0.9" fill="none"/><path d="M26.4 347.6H33.4" stroke="#101010" stroke-width="0.8"/><path d="M38.3 342.8H42.5L40.4 345.3Z" fill="#101018"/><path d="M26 364.6H34.6M30.2 364.6V367.4M25.6 367.6H34.8" stroke="#9898a8" stroke-width="1"/><path d="M27.6 364.4V358.2C27.6 356 31 356 31 358.2V360.4H34.4V364.4" fill="none" stroke="#9898a8" stroke-width="1"/><path d="M24.8 378L27.2 375.2H34.8V382.4L32.4 385H24.8Z" fill="#a4a4b0"/><path d="M24.8 378H32.4V385M32.4 378L34.8 375.2" stroke="#c8c8d4" stroke-width="0.7" fill="none"/><path d="M25 407H36M25 410H36M25 413H36M25 416H36" stroke="#9c9cac" stroke-width="1.3"/><circle cx="30.2" cy="428" r="5.1" fill="#f4f4f8" stroke="#80808e" stroke-width="1"/><path d="M27.6 430.6C27.6 426.6 32.8 426.6 32.8 430.6" fill="none" stroke="#80808e" stroke-width="0.9"/><path d="M29.4 432.4L30.2 430.4L31 432.4" fill="none" stroke="#80808e" stroke-width="0.7"/><rect x="25.8" y="439.4" width="9.6" height="8.6" fill="#ececf4" stroke="#a0a0b0" stroke-width="0.9"/><path d="M27.2 443.6H30.2M27.2 446H30.2" stroke="#9090a0" stroke-width="0.8"/><path d="M31.6 441H33.8M31.6 445.6H33.8" stroke="#50505c" stroke-width="1.1"/><path d="M29 457.2L31.6 459.8M31.6 457.2L29 459.8" stroke="#70707c" stroke-width="0.9"/><path d="M25.6 465V461.6H35.4V465" stroke="#a0a0b0" stroke-width="0.9" fill="none"/><path d="M25.4 473.4H28.4M26.9 471.8V473.4M25.2 475H28.6L26.9 477Z" fill="#101018" stroke="#101018" stroke-width="0.6"/><path d="M32.6 473.2V477.4M34 473.2V477.4L36.4 475.3Z" fill="#101018" stroke="#101018" stroke-width="0.6"/></svg>
</div>
<div id="rightp">
<div class="a" style="left:599.0px;top:63.0px;width:51.0px;height:417.0px;background:#f0f0f1;"></div>
<div class="a" style="left:599.0px;top:63.0px;width:4.0px;height:395.0px;background:#a1a1a5;"></div>
<div class="a" style="left:603.0px;top:63.5px;width:25.6px;height:286.0px;background:linear-gradient(90deg,#d8d8e8 0%,#f2f2f7 12%,#efeff5 62%,#dedfd8 68%,#c4c4de 76%,#b6b6d6 100%);border-radius:0 0 5px 0;"></div>
<div class="griph" style="left:607px;top:67.2px;width:15px"></div>
<div class="a" style="left:603.0px;top:349.5px;width:25.6px;height:8.0px;background:#e2e2ee;"></div>
<svg style="left:622px;top:350.6px" width="6" height="5" viewBox="0 0 6 5"><path d="M0.5 0.2V4.8M2 0.2V4.8L4.8 2.5Z" fill="#101018" stroke="#101018" stroke-width="0.8"/></svg>
<div class="a" style="left:603.0px;top:357.5px;width:19.0px;height:122.0px;background:linear-gradient(90deg,#c8c8de 0%,#e0e0ee 10%,#f0f0f5 24%,#efeff5 66%,#d4d4e6 82%,#bcbcd8 100%);border-radius:0 0 4px 0;"></div>
<div class="griph" style="left:606px;top:361.6px;width:11px"></div>
<div class="a" style="left:603.0px;top:472.0px;width:18.5px;height:7.5px;background:#c6c6e1;border-radius:0 0 4px 0;"></div>
<div class="a" style="left:611.4px;top:472.8px;width:1.0px;height:6.2px;background:#e4e4f0;"></div>
<div class="a" style="left:631.3px;top:63.5px;width:19.7px;height:47.3px;background:#f6f6fa;border:1px solid #b4b4c2;border-right:none;border-top:none;box-sizing:border-box;border-radius:0 0 0 2px;"></div>
<div class="vt" style="left:632.9px;top:67.4px;width:14px;line-height:14px;font-size:11.2px;letter-spacing:-0.42px">Apps</div>
<div class="a" style="left:631.3px;top:121.4px;width:19.7px;height:95.2px;background:#f6f6fa;border:1px solid #b4b4c2;border-right:none;border-top:none;box-sizing:border-box;border-radius:0 0 0 2px;"></div>
<div class="vt" style="left:632.9px;top:123.8px;width:14px;line-height:14px;font-size:11.2px;letter-spacing:-0.37px">Object Manager</div>
<svg style="left:0;top:0" width="650" height="504" viewBox="0 0 650 504"><path d="M607.0 80.6L610.0 78.9V81.9L607.0 83.6ZM613.0 77.2L616.0 75.5V78.5L613.0 80.2ZM610.0 81.9L613.0 80.2V83.2L610.0 84.9ZM616.0 78.5L619.0 76.8V79.8L616.0 81.5ZM607.0 86.6L610.0 84.9V87.9L607.0 89.6ZM613.0 83.2L616.0 81.5V84.5L613.0 86.2Z" fill="#50505c"/><path d="M609 90.5V100.9H619" stroke="#a4a4b4" stroke-width="0.9" fill="none"/><path d="M609.6 100.1L617.6 91.9" stroke="#a4a4b4" stroke-width="1"/><path d="M607.6 92.1L609 90.1L610.4 92.1" stroke="#a4a4b4" stroke-width="0.8" fill="none"/><path d="M609 107V117.4H619" stroke="#a4a4b4" stroke-width="0.9" fill="none"/><path d="M609.6 116.6L617.6 108.4" stroke="#a4a4b4" stroke-width="1"/><path d="M607.6 108.6L609 106.6L610.4 108.6" stroke="#a4a4b4" stroke-width="0.8" fill="none"/><path d="M609 123V133.4H619" stroke="#a4a4b4" stroke-width="0.9" fill="none"/><path d="M609.6 132.6L617.6 124.4" stroke="#a4a4b4" stroke-width="1"/><path d="M607.6 124.6L609 122.6L610.4 124.6" stroke="#a4a4b4" stroke-width="0.8" fill="none"/><path d="M608.4 139.6C610 136.8 616.4 136.6 618 139.8M618 148.6C616.4 151.4 610 151.4 608.4 148.4" stroke="#60606c" stroke-width="0.9" fill="none"/><text x="606.6" y="147.4" font-family="Liberation Sans, sans-serif" font-size="6.6" fill="#50505c">X</text><text x="613.6" y="147.4" font-family="Liberation Sans, sans-serif" font-size="6.6" fill="#50505c">Y</text><rect x="605.6" y="153.6" width="14.8" height="16.2" fill="#f4f9ff" stroke="#7cb4ee" stroke-width="1"/><circle cx="615.4" cy="157.6" r="1.2" fill="#30303c"/><path d="M614.6 159L612 162.6L614 163.6L612 166.6M614.6 159.2L617.4 160.8L618.4 159.6M613.2 160.8L610.8 160.4L609.8 162M612 162.8L609.8 164.2" stroke="#30303c" stroke-width="1.2" fill="none" stroke-linecap="round"/><path d="M608 156V168H618.6" stroke="#70707c" stroke-width="0.8" fill="none" stroke-dasharray="1 0.8"/><path d="M606 174.2H620" stroke="#b8b8c8" stroke-width="0.9"/><rect x="607.4" y="179.4" width="10.8" height="10.6" fill="#f0f0f6" stroke="#9898a8" stroke-width="0.9"/><path d="M609 183.2H616.6M609.4 187.6H611.4M614 187.6H616" stroke="#a4a4b4" stroke-width="0.8"/><rect x="607.4" y="195.8" width="11" height="3.8" fill="#f0f0f6" stroke="#8c8c9c" stroke-width="0.8"/><rect x="607.4" y="201.6" width="4.6" height="4.6" fill="#f0f0f6" stroke="#8c8c9c" stroke-width="0.8"/><rect x="613.8" y="201.6" width="4.6" height="4.6" fill="#f0f0f6" stroke="#8c8c9c" stroke-width="0.8"/><path d="M609 198H617" stroke="#a4a4b4" stroke-width="0.7" stroke-dasharray="1.5 1"/><rect x="607.8" y="211.8" width="4.2" height="4.4" fill="#fff" stroke="#101010" stroke-width="1.1"/><rect x="614.2" y="211.8" width="4.2" height="4.4" fill="#fff" stroke="#101010" stroke-width="1.1"/><rect x="607.8" y="218.8" width="10.6" height="3.4" fill="#fff" stroke="#101010" stroke-width="1.2"/><path d="M609 214.6H610.6M615.4 214.6H617M610 220.6H616" stroke="#101010" stroke-width="1"/><rect x="607" y="228.6" width="9.6" height="5" fill="#ececf4" stroke="#9090a0" stroke-width="0.8"/><rect x="608.6" y="234.4" width="9.6" height="5.4" fill="#f6f6fa" stroke="#9090a0" stroke-width="0.8"/><path d="M621.5 231.8H625.7L623.6 234.3Z" fill="#101018"/><path d="M606 244.4H620" stroke="#b8b8c8" stroke-width="0.9"/><path d="M609.4 250.6V260.6H618" stroke="#a4a4b4" stroke-width="1" fill="none" stroke-dasharray="1.2 0.8"/><path d="M609.4 277.2V267.59999999999997H618" stroke="#a4a4b4" stroke-width="1" fill="none" stroke-dasharray="1.2 0.8"/><path d="M609.4 277.2H617" stroke="#d0d0dc" stroke-width="0.8"/><path d="M609.4 293.8H617.6V284.2" stroke="#a4a4b4" stroke-width="1" fill="none" stroke-dasharray="1.2 0.8"/><path d="M609.4 284.8V293.8" stroke="#d0d0dc" stroke-width="0.8"/><rect x="609.4" y="300.79999999999995" width="8.2" height="9.2" fill="none" stroke="#a4a4b4" stroke-width="1" stroke-dasharray="1.2 0.8"/><path d="M609.4 317V327H618" stroke="#d0d0dc" stroke-width="0.9" fill="none"/><path d="M612.6 318V321.6H617.4" stroke="#80808c" stroke-width="1" fill="none" stroke-dasharray="1.2 0.8"/><path d="M609.4 333.4V343.4H618" stroke="#d0d0dc" stroke-width="0.9" fill="none"/><path d="M612.6 334.4V338.0H617.4" stroke="#80808c" stroke-width="1" fill="none" stroke-dasharray="1.2 0.8"/><path d="M608 367.6H617M609.4 367.6V376.4M608 376.4H611" stroke="#70707c" stroke-width="0.9" fill="none"/><rect x="612.4" y="369.6" width="4.4" height="3.4" fill="#f0f0f6" stroke="#70707c" stroke-width="0.8"/><rect x="608.4" y="385.6" width="3.4" height="5.6" fill="#f0f0f6" stroke="#70707c" stroke-width="0.8"/><rect x="613" y="387.6" width="3.6" height="3.6" fill="#f0f0f6" stroke="#70707c" stroke-width="0.8"/><path d="M607.6 392.2H617.6" stroke="#70707c" stroke-width="0.9"/><path d="M608 406.4H617M609.6 406.4V415.6" stroke="#70707c" stroke-width="0.9" fill="none"/><rect x="611.6" y="408.4" width="4.8" height="2.6" fill="#f0f0f6" stroke="#70707c" stroke-width="0.8"/><rect x="611.6" y="412.4" width="3.2" height="2.6" fill="#f0f0f6" stroke="#70707c" stroke-width="0.8"/><rect x="608.4" y="423.4" width="3.4" height="7.4" fill="#f0f0f6" stroke="#70707c" stroke-width="0.8"/><rect x="613.4" y="425.4" width="3.4" height="5.4" fill="#f0f0f6" stroke="#70707c" stroke-width="0.8"/><path d="M607.6 432H617.6M609 432V434M616 432V434" stroke="#70707c" stroke-width="0.9"/><rect x="610" y="446" width="5" height="3.6" fill="#f0f0f6" stroke="#70707c" stroke-width="0.8"/><rect x="608.4" y="451.6" width="8.4" height="3.6" fill="#f0f0f6" stroke="#70707c" stroke-width="0.8"/><path d="M612.6 444.6V456.6" stroke="#70707c" stroke-width="0.8"/><path d="M607 474H609M607 476.6H609" stroke="#101018" stroke-width="1.2"/><path d="M614 473.2V477.4M615.4 473.2V477.4L617.8 475.3Z" fill="#101018" stroke="#101018" stroke-width="0.6"/></svg>
</div>
<div id="mdi" class="a"></div>
<div id="winwrap">
<div class="a" style="left:67.0px;top:83.0px;width:359.0px;height:291.0px;background:#e3e3ed;border-radius:5px 5px 0 0;box-shadow:inset 0 0 0 1px #7e7e86;"></div>
<div class="a" style="left:68.0px;top:84.0px;width:357.0px;height:2.2px;background:#e2dfea;border-radius:4px 4px 0 0;"></div>
<div class="a" style="left:68.0px;top:86.2px;width:357.0px;height:2.4px;background:#d3c8dc;"></div>
<div class="a" style="left:68.0px;top:88.6px;width:357.0px;height:3.4px;background:#d3d3cb;"></div>
<div class="a" style="left:68.0px;top:92.0px;width:357.0px;height:12.6px;background:#b9c0ef;"></div>
<div class="a" style="left:68.0px;top:104.5px;width:357.0px;height:6.0px;background:#e6e6f0;"></div>
<div class="a" style="left:129.5px;top:92.4px;font-size:13.4px;letter-spacing:-0.03px;color:#20203c;white-space:nowrap">Gaussian - Gaussian.dat *</div>
<svg style="left:74.6px;top:91.8px" width="15" height="15" viewBox="0 0 15 15">
<rect x="0.6" y="0.6" width="12.4" height="12.6" fill="#28c838" stroke="#0c0c0c" stroke-width="1.2"/>
<rect x="1.2" y="1.2" width="11.2" height="2.4" fill="#e02828"/>
<rect x="4.2" y="1.2" width="1.6" height="2.4" fill="#f4f4f4"/><rect x="8.4" y="1.2" width="1.6" height="2.4" fill="#f4f4f4"/>
<path d="M1.2 5H12.4M1.2 7.2H12.4M1.2 9.4H12.4M1.2 11.6H12.4" stroke="#e4ffe4" stroke-width="0.9"/>
<path d="M5 3.6V12.6M9.2 3.6V12.6" stroke="#8890a0" stroke-width="0.6"/>
<path d="M1.4 14H14V1.6" stroke="#0c0c0c" stroke-width="1.4" fill="none"/>
</svg>
<div class="a" style="left:323.6px;top:90.5px;width:29.6px;height:17.0px;border:1px solid #8a90b8;border-radius:2px;background:linear-gradient(#d4d4e4 0%,#bcc2ee 30%,#b4bcec 100%);box-sizing:border-box;"><div class="a" style="left:7.6px;top:6.6px;width:13.4px;height:4.2px;background:#f6f6fa;border:1px solid #70708a;border-top-color:#9a9ab4;box-sizing:border-box"></div></div>
<div class="a" style="left:355.6px;top:90.5px;width:29.8px;height:17.0px;border:1px solid #8a90b8;border-radius:2px;background:linear-gradient(#d4d4e4 0%,#bcc2ee 30%,#b4bcec 100%);box-sizing:border-box;"><div class="a" style="left:8.6px;top:2.6px;width:12.4px;height:10.4px;border:2.4px solid #f2f2f6;outline:1px solid #74748c;box-sizing:border-box;background:#b4bae6;box-shadow:inset 0 0 0 1px #74748c"></div></div>
<div class="a" style="left:387.6px;top:90.5px;width:30.4px;height:17.0px;border:1px solid #8a90b8;border-radius:2px;background:linear-gradient(#d4d4e4 0%,#bcc2ee 30%,#b4bcec 100%);box-sizing:border-box;"><svg style="left:8px;top:2.4px" width="13" height="11" viewBox="0 0 13 11"><path d="M1.8 1.2L11.2 9.8M11.2 1.2L1.8 9.8" stroke="#62627a" stroke-width="4.2" stroke-linecap="round"/><path d="M1.8 1.2L11.2 9.8M11.2 1.2L1.8 9.8" stroke="#f4f4f8" stroke-width="2.6" stroke-linecap="round"/></svg></div>
<div class="a" style="left:74.5px;top:110.5px;width:327.5px;height:239.5px;background:#dddde9;"></div>
<div class="a" style="left:74.5px;top:110.5px;width:344.0px;height:1.0px;background:#5c6c64;"></div>
<div class="a" style="left:74.0px;top:110.5px;width:1.2px;height:239.5px;background:#50505c;"></div>
<div class="a" style="left:136.6px;top:111.5px;width:72.8px;height:20.9px;background:#dcdce8;"></div>
<div class="a" style="left:209.4px;top:111.5px;width:72.2px;height:20.9px;background:#dcdce8;"></div>
<div class="a" style="left:281.6px;top:111.5px;width:72.6px;height:20.9px;background:#dcdce8;"></div>
<div class="cell" style="left:136.6px;top:115.5px;width:72.8px;text-align:center;font-size:10.4px;color:#20203a">A(X)</div>
<div class="cell" style="left:209.4px;top:115.5px;width:72.2px;text-align:center;font-size:10.4px;color:#20203a">B(Y)</div>
<div class="cell" style="left:281.6px;top:115.5px;width:72.6px;text-align:center;font-size:10.4px;color:#101020;font-weight:bold">C(Y)</div>
<div class="a" style="left:75.0px;top:111.5px;width:61.6px;height:20.9px;background:#dcdce8;"></div>
<svg style="left:76.2px;top:112.2px" width="14" height="13" viewBox="0 0 14 13">
<text x="0" y="4.6" font-family="Liberation Sans, sans-serif" font-size="5.8" font-weight="bold" fill="#000" textLength="12.6" lengthAdjust="spacingAndGlyphs">A-Z</text>
<rect x="0.5" y="6.5" width="12" height="5.5" fill="#fff" stroke="#101010"/>
<path d="M0.5 8.5H12.5M4.5 6.5V12M8.5 6.5V12" stroke="#101010" stroke-width="1"/>
<rect x="0.5" y="6.3" width="12" height="1.6" fill="#101010"/>
</svg>
<div class="a" style="left:136.6px;top:132.4px;width:72.8px;height:86.5px;background:#e8eda9;"></div>
<div class="a" style="left:209.4px;top:132.4px;width:72.2px;height:86.5px;background:#e8eda9;"></div>
<div class="a" style="left:281.6px;top:132.4px;width:72.6px;height:86.5px;background:#180a2e;"></div>
<div class="a" style="left:281.6px;top:175.4px;width:72.6px;height:14.8px;background:#0b1452;"></div>
<div class="a" style="left:136.6px;top:218.9px;width:145.0px;height:131.1px;background:#fff;"></div>
<div class="a" style="left:281.6px;top:218.9px;width:72.6px;height:131.1px;background:#000;"></div>
<div class="a" style="left:75.0px;top:132.4px;width:61.6px;height:217.6px;background:#b8b8d7;"></div>
<div class="cell" style="left:74.5px;top:133.9px;width:58.7px;text-align:right;font-size:10.4px;color:#141430">Long Name</div>
<div class="cell" style="left:74.5px;top:148.7px;width:58.7px;text-align:right;font-size:10.4px;color:#141430">Units</div>
<div class="cell" style="left:74.5px;top:163.1px;width:58.7px;text-align:right;font-size:10.4px;color:#141430">Comments</div>
<div class="cell" style="left:74.5px;top:176.9px;width:58.7px;text-align:right;font-size:10.4px;color:#141430">F(x)=</div>
<div class="cell" style="left:74.5px;top:191.7px;width:58.7px;text-align:right;font-size:10.4px;color:#141430">Sparklines</div>
<div class="cell" style="left:74.5px;top:220.8px;width:58.5px;text-align:right;font-size:10.4px;color:#141430">1</div>
<div class="cell" style="left:136.6px;top:220.8px;width:69.6px;text-align:right;font-size:10.4px;color:#202020">1</div>
<div class="cell" style="left:209.4px;top:220.8px;width:69.0px;text-align:right;font-size:10.4px;color:#202020">3</div>
<div class="cell" style="left:281.6px;top:220.8px;width:69.4px;text-align:right;font-size:10.4px;color:#e8e8f0">1.732</div>
<div class="cell" style="left:74.5px;top:235.3px;width:58.5px;text-align:right;font-size:10.4px;color:#141430">2</div>
<div class="cell" style="left:136.6px;top:235.3px;width:69.6px;text-align:right;font-size:10.4px;color:#202020">2</div>
<div class="cell" style="left:209.4px;top:235.3px;width:69.0px;text-align:right;font-size:10.4px;color:#202020">7</div>
<div class="cell" style="left:281.6px;top:235.3px;width:69.4px;text-align:right;font-size:10.4px;color:#e8e8f0">2.646</div>
<div class="cell" style="left:74.5px;top:249.7px;width:58.5px;text-align:right;font-size:10.4px;color:#141430">3</div>
<div class="cell" style="left:136.6px;top:249.7px;width:69.6px;text-align:right;font-size:10.4px;color:#202020">3</div>
<div class="cell" style="left:209.4px;top:249.7px;width:69.0px;text-align:right;font-size:10.4px;color:#202020">5</div>
<div class="cell" style="left:281.6px;top:249.7px;width:69.4px;text-align:right;font-size:10.4px;color:#e8e8f0">2.236</div>
<div class="cell" style="left:74.5px;top:264.2px;width:58.5px;text-align:right;font-size:10.4px;color:#141430">4</div>
<div class="cell" style="left:136.6px;top:264.2px;width:69.6px;text-align:right;font-size:10.4px;color:#202020">4</div>
<div class="cell" style="left:209.4px;top:264.2px;width:69.0px;text-align:right;font-size:10.4px;color:#202020">3</div>
<div class="cell" style="left:281.6px;top:264.2px;width:69.4px;text-align:right;font-size:10.4px;color:#e8e8f0">1.732</div>
<div class="cell" style="left:74.5px;top:278.6px;width:58.5px;text-align:right;font-size:10.4px;color:#141430">5</div>
<div class="cell" style="left:136.6px;top:278.6px;width:69.6px;text-align:right;font-size:10.4px;color:#202020">5</div>
<div class="cell" style="left:209.4px;top:278.6px;width:69.0px;text-align:right;font-size:10.4px;color:#202020">2</div>
<div class="cell" style="left:281.6px;top:278.6px;width:69.4px;text-align:right;font-size:10.4px;color:#e8e8f0">1.414</div>
<div class="cell" style="left:74.5px;top:293.1px;width:58.5px;text-align:right;font-size:10.4px;color:#141430">6</div>
<div class="cell" style="left:136.6px;top:293.1px;width:69.6px;text-align:right;font-size:10.4px;color:#202020">6</div>
<div class="cell" style="left:209.4px;top:293.1px;width:69.0px;text-align:right;font-size:10.4px;color:#202020">6</div>
<div class="cell" style="left:281.6px;top:293.1px;width:69.4px;text-align:right;font-size:10.4px;color:#e8e8f0">2.449</div>
<div class="cell" style="left:74.5px;top:307.6px;width:58.5px;text-align:right;font-size:10.4px;color:#141430">7</div>
<div class="cell" style="left:136.6px;top:307.6px;width:69.6px;text-align:right;font-size:10.4px;color:#202020">7</div>
<div class="cell" style="left:209.4px;top:307.6px;width:69.0px;text-align:right;font-size:10.4px;color:#202020">10</div>
<div class="cell" style="left:281.6px;top:307.6px;width:69.4px;text-align:right;font-size:10.4px;color:#e8e8f0">3.162</div>
<div class="cell" style="left:74.5px;top:322.0px;width:58.5px;text-align:right;font-size:10.4px;color:#141430">8</div>
<div class="cell" style="left:136.6px;top:322.0px;width:69.6px;text-align:right;font-size:10.4px;color:#202020">8</div>
<div class="cell" style="left:209.4px;top:322.0px;width:69.0px;text-align:right;font-size:10.4px;color:#202020">7</div>
<div class="cell" style="left:281.6px;top:322.0px;width:69.4px;text-align:right;font-size:10.4px;color:#e8e8f0">2.646</div>
<div class="cell" style="left:74.5px;top:336.5px;width:58.5px;text-align:right;font-size:10.4px;color:#141430">9</div>
<div class="cell" style="left:136.6px;top:336.5px;width:69.6px;text-align:right;font-size:10.4px;color:#202020">9</div>
<div class="cell" style="left:209.4px;top:336.5px;width:69.0px;text-align:right;font-size:10.4px;color:#202020">6</div>
<div class="cell" style="left:281.6px;top:336.5px;width:69.4px;text-align:right;font-size:10.4px;color:#e8e8f0">2.449</div>
<div class="cell" style="left:136.6px;top:133.6px;width:72.8px;text-align:center;font-size:10.4px;color:#20203a">Channel</div>
<div class="cell" style="left:209.4px;top:133.6px;width:72.2px;text-align:center;font-size:10.4px;color:#20203a">Amplitude</div>
<div class="cell" style="left:281.6px;top:133.6px;width:72.6px;text-align:center;font-size:10.4px;color:#d4d4ec">Error</div>
<div class="a" style="left:74.5px;top:131.9px;width:62.1px;height:1.0px;background:#26263a;"></div>
<div class="a" style="left:137.1px;top:131.9px;width:144.5px;height:1.0px;background:#e6d8c8;"></div>
<div class="a" style="left:136.6px;top:146.7px;width:145.0px;height:1.0px;background:#c4c6a6;"></div>
<div class="a" style="left:281.6px;top:146.7px;width:72.6px;height:1.0px;background:#484a40;"></div>
<div class="a" style="left:281.6px;top:144.6px;width:71.6px;height:0.8px;background:#0c1458;"></div>
<div class="a" style="left:74.5px;top:146.7px;width:62.1px;height:1.0px;background:#26263a;"></div>
<div class="a" style="left:136.6px;top:161.1px;width:145.0px;height:1.0px;background:#c4c6a6;"></div>
<div class="a" style="left:281.6px;top:161.1px;width:72.6px;height:1.0px;background:#484a40;"></div>
<div class="a" style="left:281.6px;top:159.0px;width:71.6px;height:0.8px;background:#0c1458;"></div>
<div class="a" style="left:74.5px;top:161.1px;width:62.1px;height:1.0px;background:#26263a;"></div>
<div class="a" style="left:136.6px;top:174.9px;width:145.0px;height:1.0px;background:#c4c6a6;"></div>
<div class="a" style="left:281.6px;top:174.9px;width:72.6px;height:1.0px;background:#484a40;"></div>
<div class="a" style="left:281.6px;top:172.8px;width:71.6px;height:0.8px;background:#0c1458;"></div>
<div class="a" style="left:74.5px;top:174.9px;width:62.1px;height:1.0px;background:#26263a;"></div>
<div class="a" style="left:136.6px;top:189.7px;width:145.0px;height:1.0px;background:#c4c6a6;"></div>
<div class="a" style="left:281.6px;top:189.7px;width:72.6px;height:1.0px;background:#484a40;"></div>
<div class="a" style="left:281.6px;top:187.6px;width:71.6px;height:0.8px;background:#0c1458;"></div>
<div class="a" style="left:74.5px;top:189.7px;width:62.1px;height:1.0px;background:#26263a;"></div>
<div class="a" style="left:136.6px;top:218.4px;width:145.0px;height:1.0px;background:#b4b4b0;"></div>
<div class="a" style="left:74.5px;top:218.4px;width:62.1px;height:1.0px;background:#50608a;"></div>
<div class="a" style="left:136.6px;top:232.9px;width:145.0px;height:1.0px;background:#dcdce0;"></div>
<div class="a" style="left:281.6px;top:232.9px;width:72.6px;height:1.0px;background:#2a3024;"></div>
<div class="a" style="left:74.5px;top:232.9px;width:62.1px;height:1.0px;background:#16162a;"></div>
<div class="a" style="left:136.6px;top:247.3px;width:145.0px;height:1.0px;background:#dcdce0;"></div>
<div class="a" style="left:281.6px;top:247.3px;width:72.6px;height:1.0px;background:#2a3024;"></div>
<div class="a" style="left:74.5px;top:247.3px;width:62.1px;height:1.0px;background:#16162a;"></div>
<div class="a" style="left:136.6px;top:261.8px;width:145.0px;height:1.0px;background:#dcdce0;"></div>
<div class="a" style="left:281.6px;top:261.8px;width:72.6px;height:1.0px;background:#2a3024;"></div>
<div class="a" style="left:74.5px;top:261.8px;width:62.1px;height:1.0px;background:#16162a;"></div>
<div class="a" style="left:136.6px;top:276.2px;width:145.0px;height:1.0px;background:#dcdce0;"></div>
<div class="a" style="left:281.6px;top:276.2px;width:72.6px;height:1.0px;background:#2a3024;"></div>
<div class="a" style="left:74.5px;top:276.2px;width:62.1px;height:1.0px;background:#16162a;"></div>
<div class="a" style="left:136.6px;top:290.7px;width:145.0px;height:1.0px;background:#dcdce0;"></div>
<div class="a" style="left:281.6px;top:290.7px;width:72.6px;height:1.0px;background:#2a3024;"></div>
<div class="a" style="left:74.5px;top:290.7px;width:62.1px;height:1.0px;background:#16162a;"></div>
<div class="a" style="left:136.6px;top:305.2px;width:145.0px;height:1.0px;background:#dcdce0;"></div>
<div class="a" style="left:281.6px;top:305.2px;width:72.6px;height:1.0px;background:#2a3024;"></div>
<div class="a" style="left:74.5px;top:305.2px;width:62.1px;height:1.0px;background:#16162a;"></div>
<div class="a" style="left:136.6px;top:319.6px;width:145.0px;height:1.0px;background:#dcdce0;"></div>
<div class="a" style="left:281.6px;top:319.6px;width:72.6px;height:1.0px;background:#2a3024;"></div>
<div class="a" style="left:74.5px;top:319.6px;width:62.1px;height:1.0px;background:#16162a;"></div>
<div class="a" style="left:136.6px;top:334.1px;width:145.0px;height:1.0px;background:#dcdce0;"></div>
<div class="a" style="left:281.6px;top:334.1px;width:72.6px;height:1.0px;background:#2a3024;"></div>
<div class="a" style="left:74.5px;top:334.1px;width:62.1px;height:1.0px;background:#16162a;"></div>
<div class="a" style="left:136.6px;top:348.5px;width:145.0px;height:1.0px;background:#dcdce0;"></div>
<div class="a" style="left:281.6px;top:348.5px;width:72.6px;height:1.0px;background:#2a3024;"></div>
<div class="a" style="left:74.5px;top:348.5px;width:62.1px;height:1.0px;background:#16162a;"></div>
<div class="a" style="left:136.1px;top:111.5px;width:1.0px;height:238.5px;background:#26263a;"></div>
<div class="a" style="left:208.9px;top:111.5px;width:1.0px;height:20.9px;background:#26263a;"></div>
<div class="a" style="left:208.9px;top:132.4px;width:1.0px;height:86.5px;background:#c0c2a8;"></div>
<div class="a" style="left:208.9px;top:218.9px;width:1.0px;height:131.1px;background:#d4d4d8;"></div>
<div class="a" style="left:281.1px;top:111.5px;width:1.0px;height:20.9px;background:#26263a;"></div>
<div class="a" style="left:281.6px;top:111.2px;width:73.0px;height:21px;border:1px dashed #181818;box-sizing:border-box;outline:1px solid rgba(255,255,255,0.6);outline-offset:-2px"></div>
<svg style="left:0;top:0" width="650" height="504" viewBox="0 0 650 504"><polyline points="142.0,215.8 205.6,193.3" fill="none" stroke="#20202a" stroke-width="0.9" stroke-linejoin="round"/><polyline points="214.4,215.0 217.3,214.0 220.3,215.5 223.5,213.8 226.7,215.0 230.9,212.1 235.8,207.2 239.5,199.8 243.2,194.4 246.4,193.1 249.3,194.4 253.0,201.0 256.7,208.4 260.4,211.6 264.1,213.3 267.8,215.0 270.3,214.0 272.7,215.0 275.9,213.6 278.4,215.5" fill="none" stroke="#20202a" stroke-width="0.9" stroke-linejoin="round"/><polyline points="287.0,214.0 290.0,210.9 292.4,213.3 295.4,209.6 298.1,212.6 301.0,210.9 306.0,204.7 310.9,198.5 315.1,194.4 318.3,193.1 322.0,194.4 325.7,198.5 329.4,204.2 333.1,208.4 336.8,210.9 339.2,213.3 341.7,211.6 344.2,212.6 346.6,210.4 349.1,210.9 351.6,215.8" fill="none" stroke="#e8e8f4" stroke-width="0.9" stroke-linejoin="round"/><rect x="141.0" y="214.8" width="2" height="2" fill="#f01818"/><rect x="204.6" y="192.3" width="2" height="2" fill="#f01818"/><rect x="213.4" y="214.0" width="2" height="2" fill="#f01818"/><rect x="277.4" y="214.5" width="2" height="2" fill="#f01818"/><rect x="286.0" y="213.0" width="2" height="2" fill="#20d8f0"/><rect x="350.6" y="214.8" width="2" height="2" fill="#20d8f0"/><path d="M331.2 166.5V179L334 176.4L336.2 181.2L338 180.4L335.9 175.8H339.8Z" fill="#fff" stroke="#181828" stroke-width="0.9" stroke-linejoin="round"/></svg>
<div class="a" style="left:402.0px;top:111.5px;width:16.5px;height:238.5px;background:#f0f0f2;"></div>
<div class="a" style="left:403.5px;top:126.8px;width:13.5px;height:37.0px;background:#cdcdc6;"></div>
<svg style="left:406px;top:116px" width="9" height="6" viewBox="0 0 9 6"><path d="M1 5L4.5 1.5L8 5" fill="none" stroke="#404050" stroke-width="1.3"/></svg>
<svg style="left:406px;top:336px" width="9" height="6" viewBox="0 0 9 6"><path d="M1 1L4.5 4.5L8 1" fill="none" stroke="#404050" stroke-width="1.3"/></svg>
<div class="a" style="left:74.5px;top:350.0px;width:344.0px;height:16.0px;background:#d5d5d0;"></div>
<div class="a" style="left:74.5px;top:350.0px;width:240.5px;height:1.0px;background:#e6e6ea;"></div>
<div class="a" style="left:75.0px;top:351.5px;width:14.5px;height:14.0px;background:#f2f2f2;border:1px solid #84848c;box-sizing:border-box;border-top-color:#fdfdfd;border-left-color:#9c9ca4;"></div>
<div class="a" style="left:90.0px;top:351.5px;width:15.5px;height:14.0px;background:#f2f2f2;border:1px solid #84848c;box-sizing:border-box;border-top-color:#fdfdfd;border-left-color:#9c9ca4;"></div>
<svg style="left:79px;top:354.5px" width="5" height="7" viewBox="0 0 5 7"><path d="M4.5 0.5L0.8 3.5L4.5 6.5Z" fill="#6a6a78"/></svg>
<svg style="left:96px;top:354.5px" width="5" height="7" viewBox="0 0 5 7"><path d="M0.5 0.5L4.2 3.5L0.5 6.5Z" fill="#6a6a78"/></svg>
<svg style="left:105px;top:350px" width="60" height="17" viewBox="0 0 60 17"><path d="M0.5 0.5H58.5L54 15.5H6.5Z" fill="#fff"/><path d="M1 1L6.5 15.5M58.5 1L54 15.5" stroke="#202028" stroke-width="1" fill="none"/></svg>
<div class="a" style="left:113.4px;top:353px;font-size:9.5px;font-weight:bold;color:#0c0c14;white-space:nowrap;letter-spacing:-0.12px">Gaussian</div>
<div class="a" style="left:315.0px;top:350.5px;width:1.2px;height:15.5px;background:#303038;"></div>
<div class="a" style="left:316.2px;top:350.5px;width:1.6px;height:15.5px;background:#e8e8ee;"></div>
<div class="a" style="left:317.8px;top:350.5px;width:1.0px;height:15.5px;background:#404048;"></div>
<div class="a" style="left:318.8px;top:351.0px;width:78.8px;height:15.0px;background:#f0f0f2;"></div>
<div class="a" style="left:333.5px;top:352.0px;width:48.5px;height:13.0px;background:#cdcdc6;"></div>
<svg style="left:322.5px;top:354px" width="6" height="9" viewBox="0 0 6 9"><path d="M5 1L1.5 4.5L5 8" fill="none" stroke="#404050" stroke-width="1.3"/></svg>
<svg style="left:387.5px;top:354px" width="6" height="9" viewBox="0 0 6 9"><path d="M1 1L4.5 4.5L1 8" fill="none" stroke="#404050" stroke-width="1.3"/></svg>
<div class="a" style="left:397.6px;top:351.0px;width:1.2px;height:15.0px;background:#404048;"></div>
<div class="a" style="left:398.8px;top:350.5px;width:3.7px;height:15.5px;background:#e8e8ee;"></div>
<div class="a" style="left:402.5px;top:350.0px;width:16.0px;height:16.0px;background:#e8e8ee;border-top:1px solid #50505a;border-left:1px solid #50505a;box-sizing:border-box;"></div>
<div class="a" style="left:402.5px;top:347.2px;width:16.0px;height:1.0px;background:#50505a;"></div>
<svg style="left:408px;top:356px" width="9" height="9" viewBox="0 0 9 9"><path d="M7 1h1.5v1.5H7zM7 4h1.5v1.5H7zM7 7h1.5v1.5H7zM4 4h1.5v1.5H4zM4 7h1.5v1.5H4zM1 7h1.5v1.5H1z" fill="#a8a8b4"/></svg>
</div>
<div id="bottomp">
<div class="a" style="left:47.4px;top:457.0px;width:555.6px;height:23.0px;background:#e6e6f0;"></div>
<div class="a" style="left:47.4px;top:457.0px;width:555.6px;height:2.2px;background:#dcdce6;"></div>
<div class="a" style="left:47.6px;top:459.2px;width:226.0px;height:18.6px;background:linear-gradient(#f3f3f6 0%,#efeff5 30%,#e4e4f0 52%,#d4d4da 66%,#c4c4dc 77%,#b9b9d8 100%);border-radius:0 0 6px 6px;"></div>
<div class="grip" style="left:50.6px;top:463.2px;height:11px"></div>
<div class="a" style="left:273.6px;top:459.2px;width:8.4px;height:18.6px;background:linear-gradient(#d2d2e6 0%,#c6c6e0 50%,#e4e4f0 100%);"></div>
<svg style="left:274.8px;top:471.4px" width="6" height="5" viewBox="0 0 6 5"><path d="M0.5 0.5H5.5" stroke="#101018" stroke-width="1"/><path d="M0.5 2H5.5L3 4.6Z" fill="#101018"/></svg>
<div class="a" style="left:282.0px;top:459.2px;width:142.8px;height:18.6px;background:linear-gradient(#f3f3f6 0%,#efeff5 30%,#e4e4f0 52%,#d4d4da 66%,#c4c4dc 77%,#b9b9d8 100%);border-radius:0 0 6px 6px;"></div>
<div class="grip" style="left:285.0px;top:463.2px;height:11px"></div>
<div class="a" style="left:424.8px;top:459.2px;width:7.6px;height:18.6px;background:linear-gradient(#d2d2e6 0%,#c6c6e0 50%,#e4e4f0 100%);"></div>
<svg style="left:425.6px;top:471.4px" width="6" height="5" viewBox="0 0 6 5"><path d="M0.5 0.5H5.5" stroke="#101018" stroke-width="1"/><path d="M0.5 2H5.5L3 4.6Z" fill="#101018"/></svg>
<div class="a" style="left:432.4px;top:459.2px;width:116.6px;height:18.6px;background:linear-gradient(#f3f3f6 0%,#efeff5 30%,#e4e4f0 52%,#d4d4da 66%,#c4c4dc 77%,#b9b9d8 100%);border-radius:0 0 6px 6px;"></div>
<div class="grip" style="left:435.4px;top:463.2px;height:11px"></div>
<div class="a" style="left:549.0px;top:459.2px;width:8.6px;height:18.6px;background:linear-gradient(#d2d2e6 0%,#c6c6e0 50%,#e4e4f0 100%);"></div>
<svg style="left:550.3px;top:471.4px" width="6" height="5" viewBox="0 0 6 5"><path d="M0.5 0.5H5.5" stroke="#101018" stroke-width="1"/><path d="M0.5 2H5.5L3 4.6Z" fill="#101018"/></svg>
<div class="a" style="left:557.6px;top:459.2px;width:37.8px;height:18.6px;background:linear-gradient(#f3f3f6 0%,#efeff5 30%,#e4e4f0 52%,#d4d4da 66%,#c4c4dc 77%,#b9b9d8 100%);border-radius:0 0 6px 6px;"></div>
<div class="grip" style="left:560.6px;top:463.2px;height:11px"></div>
<div class="a" style="left:595.4px;top:459.2px;width:7.6px;height:18.6px;background:linear-gradient(#d2d2e6 0%,#c6c6e0 50%,#e4e4f0 100%);"></div>
<svg style="left:596.2px;top:471.4px" width="6" height="5" viewBox="0 0 6 5"><path d="M0.5 0.5H5.5" stroke="#101018" stroke-width="1"/><path d="M0.5 2H5.5L3 4.6Z" fill="#101018"/></svg>
<svg style="left:596.0px;top:462.6px" width="7" height="4" viewBox="0 0 7 4"><path d="M0.4 0.3H2.2L3.2 2L2.2 3.7H0.4L1.4 2Z M3.8 0.3H5.6L6.6 2L5.6 3.7H3.8L4.8 2Z" fill="#181828"/></svg>
<div class="a" style="left:313.5px;top:461.7px;width:1.0px;height:13.5px;background:#b4b4c8;box-shadow:1px 0 0 #f4f4fa;"></div>
<div class="a" style="left:474.9px;top:461.7px;width:1.0px;height:13.5px;background:#b4b4c8;box-shadow:1px 0 0 #f4f4fa;"></div>
<div class="a" style="left:528.5px;top:461.7px;width:1.0px;height:13.5px;background:#b4b4c8;box-shadow:1px 0 0 #f4f4fa;"></div>
<svg style="left:0;top:0" width="650" height="504" viewBox="0 0 650 504"><path d="M56.6 473.6L66 463.6" stroke="#101010" stroke-width="1.1"/><path d="M69.9 466.8H74.1L72.0 469.3Z" fill="#101018"/><rect x="80.0" y="471.4" width="2.2" height="2.2" fill="#101010"/><rect x="83.6" y="467.2" width="2.2" height="2.2" fill="#101010"/><rect x="87.0" y="463.4" width="2.2" height="2.2" fill="#101010"/><path d="M92.6 466.8H96.8L94.7 469.3Z" fill="#101018"/><path d="M103.4 472.2L111 464.6" stroke="#101010" stroke-width="1.1"/><rect x="102.2" y="471" width="2.4" height="2.4" fill="#101010"/><rect x="109.8" y="463.4" width="2.4" height="2.4" fill="#101010"/><path d="M115.5 466.8H119.7L117.6 469.3Z" fill="#101018"/><rect x="123.6" y="467.4" width="3" height="6.6" fill="#e81010" stroke="#600000" stroke-width="0.6"/><rect x="127.2" y="463.6" width="3" height="10.4" fill="#e81010" stroke="#600000" stroke-width="0.6"/><rect x="130.8" y="466.2" width="3" height="7.8" fill="#e81010" stroke="#600000" stroke-width="0.6"/><path d="M137.7 466.8H141.9L139.8 469.3Z" fill="#101018"/><rect x="146.4" y="463.6" width="11" height="10.6" fill="#f0f4ff" stroke="#1830c8" stroke-width="1.1"/><path d="M147 473.6L157 464.4" stroke="#101010" stroke-width="1"/><path d="M147.4 466.4C150 464.2 153.6 469.6 156.8 468.4" stroke="#2060d8" stroke-width="0.9" fill="none"/><path d="M160.3 466.8H164.5L162.4 469.3Z" fill="#101018"/><path d="M174.2 463V465M174.2 471.6V474M171.6 463H176.8M171.6 474H176.8" stroke="#e81010" stroke-width="1"/><rect x="171.2" y="465.2" width="6.2" height="6.2" fill="#fff" stroke="#e81010" stroke-width="1.1"/><path d="M171.2 468.4H177.4" stroke="#e81010" stroke-width="1"/><path d="M182.4 466.8H186.6L184.5 469.3Z" fill="#101018"/><path d="M190.6 465.4V474H202.2V468L199 471L195.4 467.6Z" fill="#101010"/><path d="M192.4 474L195.4 468.6L199.4 472.2L202.2 469.4V474Z" fill="#e81010"/><path d="M194.6 468.6L196 466.6L199 469.2L201.8 466.6L202.2 468.6L199.2 471.4L195.6 468.2Z" fill="#18c030"/><path d="M204.9 466.8H209.1L207.0 469.3Z" fill="#101018"/><circle cx="219.4" cy="468.8" r="4.6" fill="#fff" stroke="#101010" stroke-width="1.1"/><path d="M214 464V473.6M213 465H215M213 472.6H215" stroke="#101010" stroke-width="0.9"/><path d="M218.4 466.6H220.4V471.2M218.4 471.2H221.4" stroke="#101010" stroke-width="0.9" fill="none"/><path d="M227.9 466.8H232.1L230.0 469.3Z" fill="#101018"/><path d="M239.4 463.2V474M244 463.2V474" stroke="#101010" stroke-width="0.8"/><rect x="237.4" y="465.4" width="3.8" height="6" fill="#fff" stroke="#101010" stroke-width="1"/><rect x="242.2" y="464.6" width="3.8" height="7.6" fill="#e81010"/><path d="M249.9 466.8H254.1L252.0 469.3Z" fill="#101018"/><rect x="259.6" y="464" width="10.2" height="9.6" fill="#e8d020" stroke="#101010" stroke-width="1.1"/><path d="M261 466L263.4 464.6L268.4 467V472L266 473.2L261 470.6Z" fill="#f8f0a0" stroke="#101010" stroke-width="0.7"/><path d="M263 468.6L265.4 470.2" stroke="#e81010" stroke-width="1.2"/><path d="M291.4 467L294.4 464.6L301.8 465.4V471.6L298.6 474.4L291.4 473.4Z" fill="#f4f4f8" stroke="#101010" stroke-width="0.9"/><rect x="293" y="467.4" width="2.4" height="5.8" fill="#2040e0"/><rect x="296" y="465.8" width="2.2" height="7.8" fill="#18b838"/><rect x="298.8" y="467.8" width="1.8" height="4.2" fill="#e81010"/><path d="M305.2 466.8H309.4L307.3 469.3Z" fill="#101018"/><path d="M319.4 470L324.4 464.4L330.2 465.6L325.4 471.4Z" fill="#f0e020"/><path d="M319.4 470L321.8 467.2L327.8 468.6L325.4 471.4Z" fill="#20c040"/><path d="M322.8 466.2L324.4 464.4L330.2 465.6L328.8 467.4Z" fill="#e82020"/><path d="M319.4 470V472.6L325.4 474.2V471.4ZM325.4 471.4V474.2L330.2 468.4V465.6Z" fill="#2040d8"/><path d="M319.4 470L324.4 464.4L330.2 465.6L325.4 471.4Z" fill="none" stroke="#202020" stroke-width="0.5"/><path d="M333.5 466.8H337.7L335.6 469.3Z" fill="#101018"/><path d="M342 468L345.4 464.4H352V470.4L348.6 474H342Z" fill="#fff" stroke="#101010" stroke-width="0.9"/><path d="M342 468H348.6V474M348.6 468L352 464.4" stroke="#101010" stroke-width="0.7" fill="none"/><rect x="344" y="470" width="1.6" height="1.6" fill="#2040e0"/><rect x="346.4" y="466" width="1.6" height="1.6" fill="#2040e0"/><rect x="349.4" y="467.6" width="1.4" height="1.4" fill="#2040e0"/><path d="M356.1 466.8H360.3L358.2 469.3Z" fill="#101018"/><rect x="364.6" y="463.6" width="11.4" height="10.4" fill="#18c030" stroke="#0a6018" stroke-width="0.8"/><rect x="366" y="465" width="1.8" height="1.8" fill="#f0e020"/><rect x="369.4" y="465" width="1.8" height="1.8" fill="#2040e0"/><rect x="372.8" y="465" width="1.8" height="1.8" fill="#f0e020"/><rect x="366" y="468" width="1.8" height="1.8" fill="#2040e0"/><rect x="369.4" y="468" width="1.8" height="1.8" fill="#e82020"/><rect x="372.8" y="468" width="1.8" height="1.8" fill="#2040e0"/><rect x="366" y="471" width="1.8" height="1.8" fill="#f0e020"/><rect x="369.4" y="471" width="1.8" height="1.8" fill="#2040e0"/><rect x="372.8" y="471" width="1.8" height="1.8" fill="#f0e020"/><path d="M378.2 466.8H382.4L380.3 469.3Z" fill="#101018"/><rect x="386.8" y="466.4" width="11.4" height="7.6" fill="#18c030" stroke="#0a6018" stroke-width="0.8"/><path d="M387 465.6L389.6 463.2L392.4 465.6L395.2 463.2L398 465.6" stroke="#e81010" stroke-width="1.1" fill="none"/><path d="M387 469.4H398.2" stroke="#e81010" stroke-width="1.2"/><rect x="388.4" y="471" width="1.8" height="1.8" fill="#f0e020"/><rect x="391.8" y="471" width="1.8" height="1.8" fill="#2040e0"/><rect x="395" y="471" width="1.8" height="1.8" fill="#f0e020"/><path d="M401.2 466.8H405.4L403.3 469.3Z" fill="#101018"/><rect x="410.4" y="463.8" width="11.4" height="10.2" fill="#b4b4c0" stroke="#9c9cac" stroke-width="0.8"/><path d="M412 472L416 466.4L420.4 472Z" fill="#a0a0ae"/><path d="M411 464.4L421 473.4" stroke="#c8c8d4" stroke-width="0.8"/><rect x="443.6" y="463.6" width="9.6" height="7.2" fill="#fff" stroke="#101010" stroke-width="1.3"/><rect x="445.40000000000003" y="465.2" width="1.6" height="1.8" fill="#101010"/><rect x="449.8" y="465.2" width="1.6" height="1.8" fill="#101010"/><path d="M446.20000000000005 468.8H450.8" stroke="#101010" stroke-width="0.9"/><path d="M445.0 470.8L443.20000000000005 474.2H446.6L447.20000000000005 472.4H449.6L450.20000000000005 474.2H453.6L451.8 470.8" fill="#fff" stroke="#101010" stroke-width="0.8"/><rect x="443.0" y="472.8" width="3.4" height="1.6" fill="#e81010"/><rect x="450.40000000000003" y="472.8" width="3.4" height="1.6" fill="#e81010"/><rect x="460" y="463.6" width="9.6" height="7.2" fill="#fff" stroke="#9090a0" stroke-width="1.3"/><rect x="461.8" y="465.2" width="1.6" height="1.8" fill="#9090a0"/><rect x="466.2" y="465.2" width="1.6" height="1.8" fill="#9090a0"/><path d="M462.6 468.8H467.2" stroke="#9090a0" stroke-width="0.9"/><path d="M461.4 470.8L459.6 474.2H463L463.6 472.4H466L466.6 474.2H470L468.2 470.8" fill="#e8e8f0" stroke="#9090a0" stroke-width="0.8"/><path d="M481.4 464.4H490.6V469.4C490.6 472.4 488.4 474 486 474C483.6 474 481.4 472.4 481.4 469.4Z" fill="#c8c8d4" stroke="#8c8c9c" stroke-width="0.9"/><rect x="483" y="466.4" width="2" height="1.6" fill="#70707c"/><rect x="487" y="466.4" width="2" height="1.6" fill="#70707c"/><path d="M484 470.6C485.2 471.8 486.8 471.8 488 470.6" stroke="#70707c" stroke-width="0.8" fill="none"/><rect x="496.6" y="467.0" width="1.6" height="1.6" fill="#9c9cac"/><rect x="499.2" y="467.0" width="1.6" height="1.6" fill="#9c9cac"/><rect x="501.8" y="467.0" width="1.6" height="1.6" fill="#9c9cac"/><rect x="496.6" y="470.0" width="1.6" height="1.6" fill="#9c9cac"/><rect x="499.2" y="470.0" width="1.6" height="1.6" fill="#9c9cac"/><rect x="501.8" y="470.0" width="1.6" height="1.6" fill="#9c9cac"/><path d="M506.0 464.6V473.4M504.2 466.4L506.0 464.2L507.8 466.4M504.2 471.6L506.0 473.8L507.8 471.6" stroke="#9c9cac" stroke-width="0.9" fill="none"/><rect x="512.4" y="467.0" width="1.6" height="1.6" fill="#9c9cac"/><rect x="515.0" y="467.0" width="1.6" height="1.6" fill="#9c9cac"/><rect x="517.6" y="467.0" width="1.6" height="1.6" fill="#9c9cac"/><rect x="512.4" y="470.0" width="1.6" height="1.6" fill="#9c9cac"/><rect x="515.0" y="470.0" width="1.6" height="1.6" fill="#9c9cac"/><rect x="517.6" y="470.0" width="1.6" height="1.6" fill="#9c9cac"/><path d="M521.8 464.6V473.4M520.0 466.4L521.8 464.2L523.6 466.4M520.0 471.6L521.8 473.8L523.6 471.6" stroke="#9c9cac" stroke-width="0.9" fill="none"/><rect x="533.6" y="466.6" width="1.8" height="1.8" fill="#101010"/><rect x="536.2" y="466.6" width="1.8" height="1.8" fill="#e81010"/><rect x="538.8" y="466.6" width="1.8" height="1.8" fill="#e81010"/><rect x="533.6" y="469.6" width="1.8" height="1.8" fill="#101010"/><rect x="536.2" y="469.6" width="1.8" height="1.8" fill="#101010"/><rect x="538.8" y="469.6" width="1.8" height="1.8" fill="#101010"/><path d="M543.6 464.4V473.6M541.6 466.4L543.6 464L545.6 466.4M541.6 471.6L543.6 474L545.6 471.6" stroke="#101010" stroke-width="1.1" fill="none"/><path d="M568.4 466H575V474H568.4Z" fill="#a8a8b8"/><path d="M575 467.6C578.6 467 578.6 471.6 575 471.2" stroke="#a8a8b8" stroke-width="1.2" fill="none"/><path d="M570 463.4C570.8 464.4 569.6 465 570.4 466M573 463.4C573.8 464.4 572.6 465 573.4 466" stroke="#b8b8c8" stroke-width="0.8" fill="none"/><path d="M567.4 474.4H576" stroke="#9090a0" stroke-width="0.9"/></svg>
</div>
<div id="status" class="a">
<div class="a" style="left:0;top:0;width:650px;height:1px;background:#dcdce4"></div>
<div class="a" style="left:1.5px;top:1px;width:552.5px;height:17.5px;border:1px solid #dadae0;border-right-color:#e6e6ea;box-sizing:border-box;background:#f3f3f4"></div>
<div class="a" style="left:561.5px;top:1px;width:41.5px;height:17.5px;border:1px solid #dadae0;box-sizing:border-box;background:#f3f3f4"></div>
<div class="a" style="left:602.5px;top:1px;width:30.5px;height:17.5px;border:1px solid #dadae0;box-sizing:border-box;background:#f3f3f4"></div>
<span style="left:5.8px;letter-spacing:-0.28px">For Help, press F1</span>
<span style="left:362.4px;letter-spacing:0.13px">Average=4.3329 Sum=216.645 Count=50</span>
<span style="left:564.8px;letter-spacing:-0.15px">AU : ON</span>
<svg style="left:636.5px;top:8px" width="11" height="11" viewBox="0 0 11 11"><path d="M8 1h2v2H8zM8 4.5h2v2H8zM8 8h2v2H8zM4.5 4.5h2v2h-2zM4.5 8h2v2h-2zM1 8h2v2H1z" fill="#c8c8d0"/></svg>
</div>
</body></html>
